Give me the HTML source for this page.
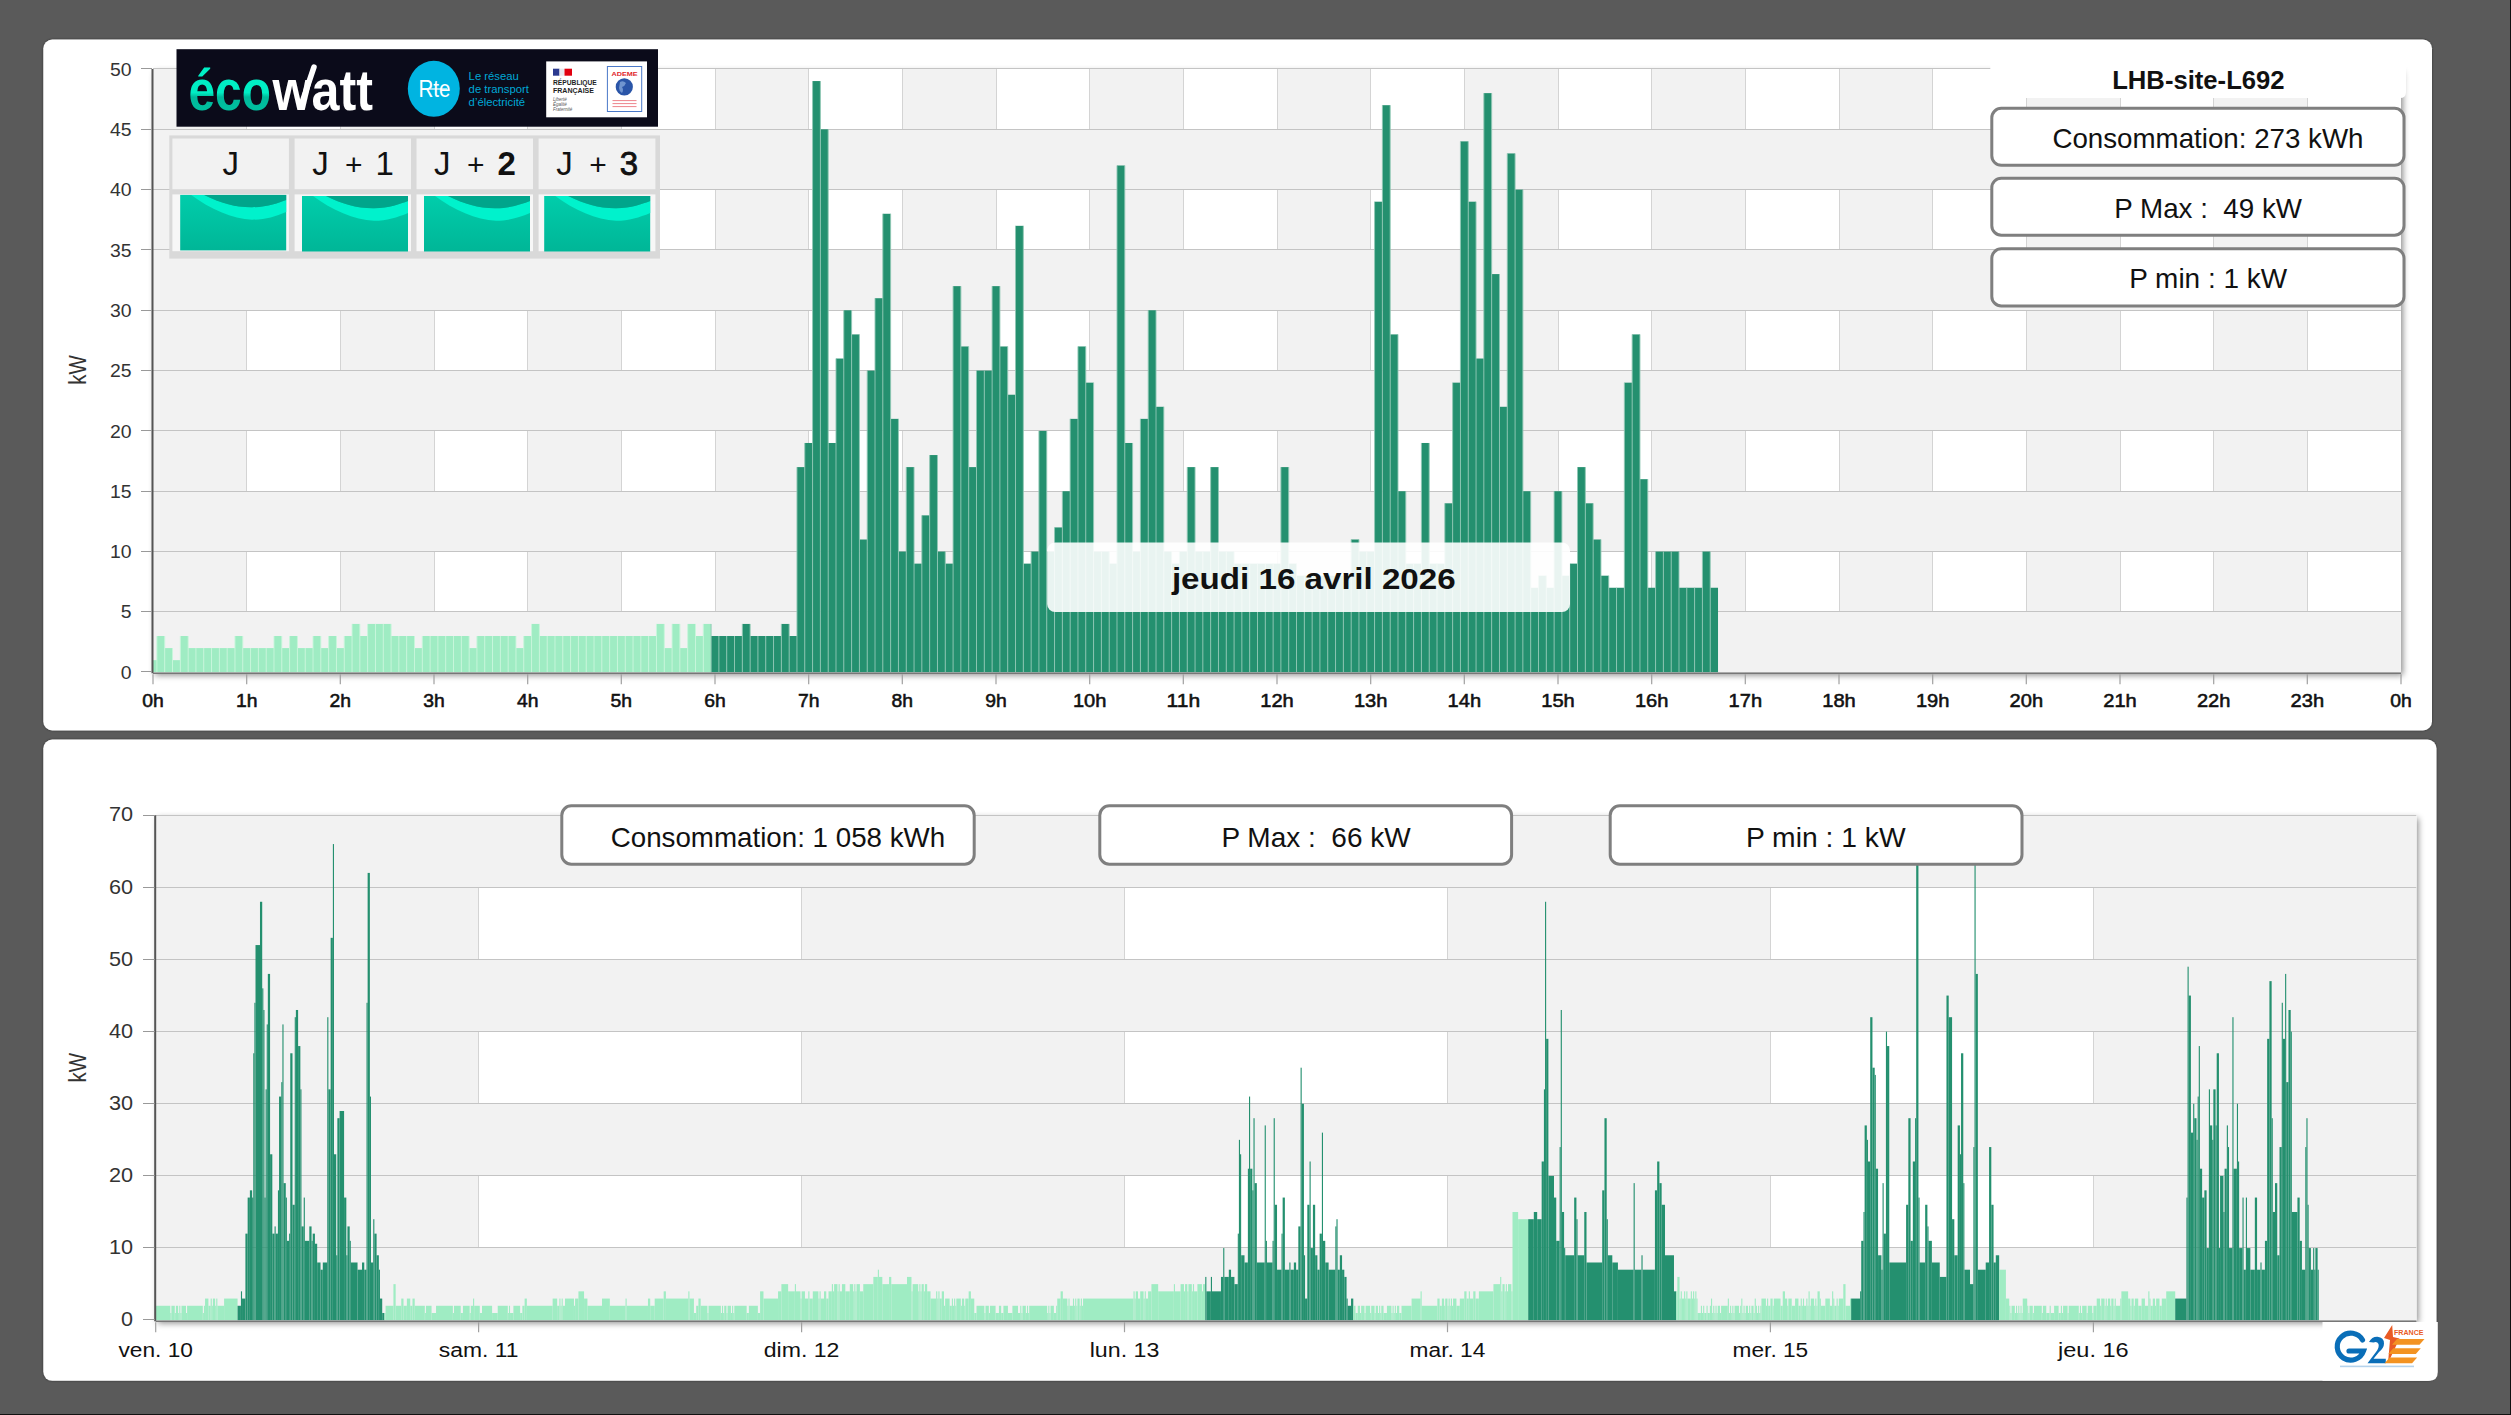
<!DOCTYPE html><html><head><meta charset="utf-8"><style>html,body{margin:0;padding:0;background:#5a5a5a;overflow:hidden} svg{display:block} text{font-family:'Liberation Sans', sans-serif}</style></head><body>
<svg width="2511" height="1415" viewBox="0 0 2511 1415">
<defs><filter id="psh" x="-5%" y="-5%" width="110%" height="115%"><feDropShadow dx="2" dy="3" stdDeviation="3" flood-color="#000" flood-opacity="0.45"/></filter><filter id="pan" x="-2%" y="-2%" width="104%" height="104%"><feDropShadow dx="0" dy="0" stdDeviation="0.8" flood-color="#000" flood-opacity="0.5"/></filter><linearGradient id="eco" x1="0" y1="0" x2="0" y2="1"><stop offset="0" stop-color="#00f0c6"/><stop offset="0.55" stop-color="#00eec4"/><stop offset="0.62" stop-color="#00b99b"/><stop offset="1" stop-color="#00c4a2"/></linearGradient><linearGradient id="wav" x1="0" y1="0" x2="0" y2="1"><stop offset="0" stop-color="#00cdab"/><stop offset="1" stop-color="#00b697"/></linearGradient><g id="wave"><rect x="0" y="0" width="106" height="55.5" fill="url(#wav)"/><path d="M11,0 L24,0 C40,8 55,12.5 72,12.3 C87,12 98,8 106,5 L106,17 C95,21.5 85,24.8 72,24.8 C52,24 30,14 11,0 Z" fill="#00f2cc"/><path d="M24,0 L106,0 L106,5 C98,8 87,12 72,12.3 C55,12.5 40,8 24,0 Z" fill="#00a58b"/></g></defs>
<rect x="0.00" y="0.00" width="2511.00" height="1415.00" fill="#5a5a5a" />
<rect x="2510.00" y="0.00" width="1.00" height="1415.00" fill="#111" />
<rect x="0.00" y="1414.00" width="2511.00" height="1.00" fill="#111" />
<rect x="43.3" y="39.6" width="2388.7" height="690.9" rx="9" fill="#fff" filter="url(#pan)"/>
<rect x="43.3" y="739.6" width="2393.2" height="641.2" rx="9" fill="#fff" filter="url(#pan)"/>
<rect x="153.0" y="69.0" width="2248.0" height="603.2" fill="#fff" filter="url(#psh)"/>
<rect x="153.00" y="69.00" width="93.67" height="603.20" fill="#f2f2f2" />
<rect x="340.33" y="69.00" width="93.67" height="603.20" fill="#f2f2f2" />
<rect x="527.67" y="69.00" width="93.67" height="603.20" fill="#f2f2f2" />
<rect x="715.00" y="69.00" width="93.67" height="603.20" fill="#f2f2f2" />
<rect x="902.33" y="69.00" width="93.67" height="603.20" fill="#f2f2f2" />
<rect x="1089.67" y="69.00" width="93.67" height="603.20" fill="#f2f2f2" />
<rect x="1277.00" y="69.00" width="93.67" height="603.20" fill="#f2f2f2" />
<rect x="1464.33" y="69.00" width="93.67" height="603.20" fill="#f2f2f2" />
<rect x="1651.67" y="69.00" width="93.67" height="603.20" fill="#f2f2f2" />
<rect x="1839.00" y="69.00" width="93.67" height="603.20" fill="#f2f2f2" />
<rect x="2026.33" y="69.00" width="93.67" height="603.20" fill="#f2f2f2" />
<rect x="2213.67" y="69.00" width="93.67" height="603.20" fill="#f2f2f2" />
<line x1="246.5" y1="69.0" x2="246.5" y2="672.2" stroke="#d4d4d4" stroke-width="1"/>
<line x1="340.5" y1="69.0" x2="340.5" y2="672.2" stroke="#d4d4d4" stroke-width="1"/>
<line x1="434.5" y1="69.0" x2="434.5" y2="672.2" stroke="#d4d4d4" stroke-width="1"/>
<line x1="527.5" y1="69.0" x2="527.5" y2="672.2" stroke="#d4d4d4" stroke-width="1"/>
<line x1="621.5" y1="69.0" x2="621.5" y2="672.2" stroke="#d4d4d4" stroke-width="1"/>
<line x1="715.5" y1="69.0" x2="715.5" y2="672.2" stroke="#d4d4d4" stroke-width="1"/>
<line x1="808.5" y1="69.0" x2="808.5" y2="672.2" stroke="#d4d4d4" stroke-width="1"/>
<line x1="902.5" y1="69.0" x2="902.5" y2="672.2" stroke="#d4d4d4" stroke-width="1"/>
<line x1="996.5" y1="69.0" x2="996.5" y2="672.2" stroke="#d4d4d4" stroke-width="1"/>
<line x1="1089.5" y1="69.0" x2="1089.5" y2="672.2" stroke="#d4d4d4" stroke-width="1"/>
<line x1="1183.5" y1="69.0" x2="1183.5" y2="672.2" stroke="#d4d4d4" stroke-width="1"/>
<line x1="1277.5" y1="69.0" x2="1277.5" y2="672.2" stroke="#d4d4d4" stroke-width="1"/>
<line x1="1370.5" y1="69.0" x2="1370.5" y2="672.2" stroke="#d4d4d4" stroke-width="1"/>
<line x1="1464.5" y1="69.0" x2="1464.5" y2="672.2" stroke="#d4d4d4" stroke-width="1"/>
<line x1="1558.5" y1="69.0" x2="1558.5" y2="672.2" stroke="#d4d4d4" stroke-width="1"/>
<line x1="1651.5" y1="69.0" x2="1651.5" y2="672.2" stroke="#d4d4d4" stroke-width="1"/>
<line x1="1745.5" y1="69.0" x2="1745.5" y2="672.2" stroke="#d4d4d4" stroke-width="1"/>
<line x1="1839.5" y1="69.0" x2="1839.5" y2="672.2" stroke="#d4d4d4" stroke-width="1"/>
<line x1="1932.5" y1="69.0" x2="1932.5" y2="672.2" stroke="#d4d4d4" stroke-width="1"/>
<line x1="2026.5" y1="69.0" x2="2026.5" y2="672.2" stroke="#d4d4d4" stroke-width="1"/>
<line x1="2120.5" y1="69.0" x2="2120.5" y2="672.2" stroke="#d4d4d4" stroke-width="1"/>
<line x1="2213.5" y1="69.0" x2="2213.5" y2="672.2" stroke="#d4d4d4" stroke-width="1"/>
<line x1="2307.5" y1="69.0" x2="2307.5" y2="672.2" stroke="#d4d4d4" stroke-width="1"/>
<rect x="153.00" y="611.88" width="2248.00" height="60.32" fill="#f2f2f2" />
<rect x="153.00" y="491.24" width="2248.00" height="60.32" fill="#f2f2f2" />
<rect x="153.00" y="370.60" width="2248.00" height="60.32" fill="#f2f2f2" />
<rect x="153.00" y="249.96" width="2248.00" height="60.32" fill="#f2f2f2" />
<rect x="153.00" y="129.32" width="2248.00" height="60.32" fill="#f2f2f2" />
<line x1="153.0" y1="611.5" x2="2401.0" y2="611.5" stroke="#c4c4c4" stroke-width="1"/>
<line x1="153.0" y1="551.5" x2="2401.0" y2="551.5" stroke="#c4c4c4" stroke-width="1"/>
<line x1="153.0" y1="491.5" x2="2401.0" y2="491.5" stroke="#c4c4c4" stroke-width="1"/>
<line x1="153.0" y1="430.5" x2="2401.0" y2="430.5" stroke="#c4c4c4" stroke-width="1"/>
<line x1="153.0" y1="370.5" x2="2401.0" y2="370.5" stroke="#c4c4c4" stroke-width="1"/>
<line x1="153.0" y1="310.5" x2="2401.0" y2="310.5" stroke="#c4c4c4" stroke-width="1"/>
<line x1="153.0" y1="249.5" x2="2401.0" y2="249.5" stroke="#c4c4c4" stroke-width="1"/>
<line x1="153.0" y1="189.5" x2="2401.0" y2="189.5" stroke="#c4c4c4" stroke-width="1"/>
<line x1="153.0" y1="129.5" x2="2401.0" y2="129.5" stroke="#c4c4c4" stroke-width="1"/>
<line x1="153.0" y1="68.5" x2="2401.0" y2="68.5" stroke="#c4c4c4" stroke-width="1"/>
<rect x="153.00" y="660.14" width="3.90" height="12.06" fill="#9fecc3" />
<rect x="156.90" y="636.01" width="7.81" height="36.19" fill="#9fecc3" />
<rect x="164.71" y="648.07" width="7.81" height="24.13" fill="#9fecc3" />
<rect x="172.51" y="660.14" width="7.81" height="12.06" fill="#9fecc3" />
<rect x="180.32" y="636.01" width="7.81" height="36.19" fill="#9fecc3" />
<rect x="188.12" y="648.07" width="7.81" height="24.13" fill="#9fecc3" />
<rect x="195.93" y="648.07" width="7.81" height="24.13" fill="#9fecc3" />
<rect x="203.74" y="648.07" width="7.81" height="24.13" fill="#9fecc3" />
<rect x="211.54" y="648.07" width="7.81" height="24.13" fill="#9fecc3" />
<rect x="219.35" y="648.07" width="7.81" height="24.13" fill="#9fecc3" />
<rect x="227.15" y="648.07" width="7.81" height="24.13" fill="#9fecc3" />
<rect x="234.96" y="636.01" width="7.81" height="36.19" fill="#9fecc3" />
<rect x="242.76" y="648.07" width="7.81" height="24.13" fill="#9fecc3" />
<rect x="250.57" y="648.07" width="7.81" height="24.13" fill="#9fecc3" />
<rect x="258.38" y="648.07" width="7.81" height="24.13" fill="#9fecc3" />
<rect x="266.18" y="648.07" width="7.81" height="24.13" fill="#9fecc3" />
<rect x="273.99" y="636.01" width="7.81" height="36.19" fill="#9fecc3" />
<rect x="281.79" y="648.07" width="7.81" height="24.13" fill="#9fecc3" />
<rect x="289.60" y="636.01" width="7.81" height="36.19" fill="#9fecc3" />
<rect x="297.40" y="648.07" width="7.81" height="24.13" fill="#9fecc3" />
<rect x="305.21" y="648.07" width="7.81" height="24.13" fill="#9fecc3" />
<rect x="313.01" y="636.01" width="7.81" height="36.19" fill="#9fecc3" />
<rect x="320.82" y="648.07" width="7.81" height="24.13" fill="#9fecc3" />
<rect x="328.63" y="636.01" width="7.81" height="36.19" fill="#9fecc3" />
<rect x="336.43" y="648.07" width="7.81" height="24.13" fill="#9fecc3" />
<rect x="344.24" y="636.01" width="7.81" height="36.19" fill="#9fecc3" />
<rect x="352.04" y="623.94" width="7.81" height="48.26" fill="#9fecc3" />
<rect x="359.85" y="636.01" width="7.81" height="36.19" fill="#9fecc3" />
<rect x="367.65" y="623.94" width="7.81" height="48.26" fill="#9fecc3" />
<rect x="375.46" y="623.94" width="7.81" height="48.26" fill="#9fecc3" />
<rect x="383.26" y="623.94" width="7.81" height="48.26" fill="#9fecc3" />
<rect x="391.07" y="636.01" width="7.81" height="36.19" fill="#9fecc3" />
<rect x="398.88" y="636.01" width="7.81" height="36.19" fill="#9fecc3" />
<rect x="406.68" y="636.01" width="7.81" height="36.19" fill="#9fecc3" />
<rect x="414.49" y="648.07" width="7.81" height="24.13" fill="#9fecc3" />
<rect x="422.29" y="636.01" width="7.81" height="36.19" fill="#9fecc3" />
<rect x="430.10" y="636.01" width="7.81" height="36.19" fill="#9fecc3" />
<rect x="437.90" y="636.01" width="7.81" height="36.19" fill="#9fecc3" />
<rect x="445.71" y="636.01" width="7.81" height="36.19" fill="#9fecc3" />
<rect x="453.51" y="636.01" width="7.81" height="36.19" fill="#9fecc3" />
<rect x="461.32" y="636.01" width="7.81" height="36.19" fill="#9fecc3" />
<rect x="469.13" y="648.07" width="7.81" height="24.13" fill="#9fecc3" />
<rect x="476.93" y="636.01" width="7.81" height="36.19" fill="#9fecc3" />
<rect x="484.74" y="636.01" width="7.81" height="36.19" fill="#9fecc3" />
<rect x="492.54" y="636.01" width="7.81" height="36.19" fill="#9fecc3" />
<rect x="500.35" y="636.01" width="7.81" height="36.19" fill="#9fecc3" />
<rect x="508.15" y="636.01" width="7.81" height="36.19" fill="#9fecc3" />
<rect x="515.96" y="648.07" width="7.81" height="24.13" fill="#9fecc3" />
<rect x="523.76" y="636.01" width="7.81" height="36.19" fill="#9fecc3" />
<rect x="531.57" y="623.94" width="7.81" height="48.26" fill="#9fecc3" />
<rect x="539.38" y="636.01" width="7.81" height="36.19" fill="#9fecc3" />
<rect x="547.18" y="636.01" width="7.81" height="36.19" fill="#9fecc3" />
<rect x="554.99" y="636.01" width="7.81" height="36.19" fill="#9fecc3" />
<rect x="562.79" y="636.01" width="7.81" height="36.19" fill="#9fecc3" />
<rect x="570.60" y="636.01" width="7.81" height="36.19" fill="#9fecc3" />
<rect x="578.40" y="636.01" width="7.81" height="36.19" fill="#9fecc3" />
<rect x="586.21" y="636.01" width="7.81" height="36.19" fill="#9fecc3" />
<rect x="594.01" y="636.01" width="7.81" height="36.19" fill="#9fecc3" />
<rect x="601.82" y="636.01" width="7.81" height="36.19" fill="#9fecc3" />
<rect x="609.62" y="636.01" width="7.81" height="36.19" fill="#9fecc3" />
<rect x="617.43" y="636.01" width="7.81" height="36.19" fill="#9fecc3" />
<rect x="625.24" y="636.01" width="7.81" height="36.19" fill="#9fecc3" />
<rect x="633.04" y="636.01" width="7.81" height="36.19" fill="#9fecc3" />
<rect x="640.85" y="636.01" width="7.81" height="36.19" fill="#9fecc3" />
<rect x="648.65" y="636.01" width="7.81" height="36.19" fill="#9fecc3" />
<rect x="656.46" y="623.94" width="7.81" height="48.26" fill="#9fecc3" />
<rect x="664.26" y="648.07" width="7.81" height="24.13" fill="#9fecc3" />
<rect x="672.07" y="623.94" width="7.81" height="48.26" fill="#9fecc3" />
<rect x="679.88" y="648.07" width="7.81" height="24.13" fill="#9fecc3" />
<rect x="687.68" y="623.94" width="7.81" height="48.26" fill="#9fecc3" />
<rect x="695.49" y="636.01" width="7.81" height="36.19" fill="#9fecc3" />
<rect x="703.29" y="623.94" width="7.81" height="48.26" fill="#9fecc3" />
<rect x="711.10" y="636.01" width="7.81" height="36.19" fill="#24906f" />
<rect x="718.90" y="636.01" width="7.81" height="36.19" fill="#24906f" />
<rect x="726.71" y="636.01" width="7.81" height="36.19" fill="#24906f" />
<rect x="734.51" y="636.01" width="7.81" height="36.19" fill="#24906f" />
<rect x="742.32" y="623.94" width="7.81" height="48.26" fill="#24906f" />
<rect x="750.12" y="636.01" width="7.81" height="36.19" fill="#24906f" />
<rect x="757.93" y="636.01" width="7.81" height="36.19" fill="#24906f" />
<rect x="765.74" y="636.01" width="7.81" height="36.19" fill="#24906f" />
<rect x="773.54" y="636.01" width="7.81" height="36.19" fill="#24906f" />
<rect x="781.35" y="623.94" width="7.81" height="48.26" fill="#24906f" />
<rect x="789.15" y="636.01" width="7.81" height="36.19" fill="#24906f" />
<rect x="796.96" y="467.11" width="7.81" height="205.09" fill="#24906f" />
<rect x="804.76" y="442.98" width="7.81" height="229.22" fill="#24906f" />
<rect x="812.57" y="81.06" width="7.81" height="591.14" fill="#24906f" />
<rect x="820.38" y="129.32" width="7.81" height="542.88" fill="#24906f" />
<rect x="828.18" y="442.98" width="7.81" height="229.22" fill="#24906f" />
<rect x="835.99" y="358.54" width="7.81" height="313.66" fill="#24906f" />
<rect x="843.79" y="310.28" width="7.81" height="361.92" fill="#24906f" />
<rect x="851.60" y="334.41" width="7.81" height="337.79" fill="#24906f" />
<rect x="859.40" y="539.50" width="7.81" height="132.70" fill="#24906f" />
<rect x="867.21" y="370.60" width="7.81" height="301.60" fill="#24906f" />
<rect x="875.01" y="298.22" width="7.81" height="373.98" fill="#24906f" />
<rect x="882.82" y="213.77" width="7.81" height="458.43" fill="#24906f" />
<rect x="890.62" y="418.86" width="7.81" height="253.34" fill="#24906f" />
<rect x="898.43" y="551.56" width="7.81" height="120.64" fill="#24906f" />
<rect x="906.24" y="467.11" width="7.81" height="205.09" fill="#24906f" />
<rect x="914.04" y="563.62" width="7.81" height="108.58" fill="#24906f" />
<rect x="921.85" y="515.37" width="7.81" height="156.83" fill="#24906f" />
<rect x="929.65" y="455.05" width="7.81" height="217.15" fill="#24906f" />
<rect x="937.46" y="551.56" width="7.81" height="120.64" fill="#24906f" />
<rect x="945.26" y="563.62" width="7.81" height="108.58" fill="#24906f" />
<rect x="953.07" y="286.15" width="7.81" height="386.05" fill="#24906f" />
<rect x="960.88" y="346.47" width="7.81" height="325.73" fill="#24906f" />
<rect x="968.68" y="467.11" width="7.81" height="205.09" fill="#24906f" />
<rect x="976.49" y="370.60" width="7.81" height="301.60" fill="#24906f" />
<rect x="984.29" y="370.60" width="7.81" height="301.60" fill="#24906f" />
<rect x="992.10" y="286.15" width="7.81" height="386.05" fill="#24906f" />
<rect x="999.90" y="346.47" width="7.81" height="325.73" fill="#24906f" />
<rect x="1007.71" y="394.73" width="7.81" height="277.47" fill="#24906f" />
<rect x="1015.51" y="225.83" width="7.81" height="446.37" fill="#24906f" />
<rect x="1023.32" y="563.62" width="7.81" height="108.58" fill="#24906f" />
<rect x="1031.12" y="551.56" width="7.81" height="120.64" fill="#24906f" />
<rect x="1038.93" y="430.92" width="7.81" height="241.28" fill="#24906f" />
<rect x="1046.74" y="551.56" width="7.81" height="120.64" fill="#24906f" />
<rect x="1054.54" y="527.43" width="7.81" height="144.77" fill="#24906f" />
<rect x="1062.35" y="491.24" width="7.81" height="180.96" fill="#24906f" />
<rect x="1070.15" y="418.86" width="7.81" height="253.34" fill="#24906f" />
<rect x="1077.96" y="346.47" width="7.81" height="325.73" fill="#24906f" />
<rect x="1085.76" y="382.66" width="7.81" height="289.54" fill="#24906f" />
<rect x="1093.57" y="551.56" width="7.81" height="120.64" fill="#24906f" />
<rect x="1101.38" y="551.56" width="7.81" height="120.64" fill="#24906f" />
<rect x="1109.18" y="563.62" width="7.81" height="108.58" fill="#24906f" />
<rect x="1116.99" y="165.51" width="7.81" height="506.69" fill="#24906f" />
<rect x="1124.79" y="442.98" width="7.81" height="229.22" fill="#24906f" />
<rect x="1132.60" y="551.56" width="7.81" height="120.64" fill="#24906f" />
<rect x="1140.40" y="418.86" width="7.81" height="253.34" fill="#24906f" />
<rect x="1148.21" y="310.28" width="7.81" height="361.92" fill="#24906f" />
<rect x="1156.01" y="406.79" width="7.81" height="265.41" fill="#24906f" />
<rect x="1163.82" y="551.56" width="7.81" height="120.64" fill="#24906f" />
<rect x="1171.62" y="563.62" width="7.81" height="108.58" fill="#24906f" />
<rect x="1179.43" y="551.56" width="7.81" height="120.64" fill="#24906f" />
<rect x="1187.24" y="467.11" width="7.81" height="205.09" fill="#24906f" />
<rect x="1195.04" y="551.56" width="7.81" height="120.64" fill="#24906f" />
<rect x="1202.85" y="551.56" width="7.81" height="120.64" fill="#24906f" />
<rect x="1210.65" y="467.11" width="7.81" height="205.09" fill="#24906f" />
<rect x="1218.46" y="551.56" width="7.81" height="120.64" fill="#24906f" />
<rect x="1226.26" y="551.56" width="7.81" height="120.64" fill="#24906f" />
<rect x="1234.07" y="563.62" width="7.81" height="108.58" fill="#24906f" />
<rect x="1241.88" y="563.62" width="7.81" height="108.58" fill="#24906f" />
<rect x="1249.68" y="563.62" width="7.81" height="108.58" fill="#24906f" />
<rect x="1257.49" y="563.62" width="7.81" height="108.58" fill="#24906f" />
<rect x="1265.29" y="563.62" width="7.81" height="108.58" fill="#24906f" />
<rect x="1273.10" y="563.62" width="7.81" height="108.58" fill="#24906f" />
<rect x="1280.90" y="467.11" width="7.81" height="205.09" fill="#24906f" />
<rect x="1288.71" y="563.62" width="7.81" height="108.58" fill="#24906f" />
<rect x="1296.51" y="575.69" width="7.81" height="96.51" fill="#24906f" />
<rect x="1304.32" y="575.69" width="7.81" height="96.51" fill="#24906f" />
<rect x="1312.12" y="575.69" width="7.81" height="96.51" fill="#24906f" />
<rect x="1319.93" y="575.69" width="7.81" height="96.51" fill="#24906f" />
<rect x="1327.74" y="575.69" width="7.81" height="96.51" fill="#24906f" />
<rect x="1335.54" y="575.69" width="7.81" height="96.51" fill="#24906f" />
<rect x="1343.35" y="575.69" width="7.81" height="96.51" fill="#24906f" />
<rect x="1351.15" y="539.50" width="7.81" height="132.70" fill="#24906f" />
<rect x="1358.96" y="551.56" width="7.81" height="120.64" fill="#24906f" />
<rect x="1366.76" y="551.56" width="7.81" height="120.64" fill="#24906f" />
<rect x="1374.57" y="201.70" width="7.81" height="470.50" fill="#24906f" />
<rect x="1382.38" y="105.19" width="7.81" height="567.01" fill="#24906f" />
<rect x="1390.18" y="334.41" width="7.81" height="337.79" fill="#24906f" />
<rect x="1397.99" y="491.24" width="7.81" height="180.96" fill="#24906f" />
<rect x="1405.79" y="563.62" width="7.81" height="108.58" fill="#24906f" />
<rect x="1413.60" y="563.62" width="7.81" height="108.58" fill="#24906f" />
<rect x="1421.40" y="442.98" width="7.81" height="229.22" fill="#24906f" />
<rect x="1429.21" y="563.62" width="7.81" height="108.58" fill="#24906f" />
<rect x="1437.01" y="563.62" width="7.81" height="108.58" fill="#24906f" />
<rect x="1444.82" y="503.30" width="7.81" height="168.90" fill="#24906f" />
<rect x="1452.62" y="382.66" width="7.81" height="289.54" fill="#24906f" />
<rect x="1460.43" y="141.38" width="7.81" height="530.82" fill="#24906f" />
<rect x="1468.24" y="201.70" width="7.81" height="470.50" fill="#24906f" />
<rect x="1476.04" y="358.54" width="7.81" height="313.66" fill="#24906f" />
<rect x="1483.85" y="93.13" width="7.81" height="579.07" fill="#24906f" />
<rect x="1491.65" y="274.09" width="7.81" height="398.11" fill="#24906f" />
<rect x="1499.46" y="406.79" width="7.81" height="265.41" fill="#24906f" />
<rect x="1507.26" y="153.45" width="7.81" height="518.75" fill="#24906f" />
<rect x="1515.07" y="189.64" width="7.81" height="482.56" fill="#24906f" />
<rect x="1522.88" y="491.24" width="7.81" height="180.96" fill="#24906f" />
<rect x="1530.68" y="587.75" width="7.81" height="84.45" fill="#24906f" />
<rect x="1538.49" y="575.69" width="7.81" height="96.51" fill="#24906f" />
<rect x="1546.29" y="587.75" width="7.81" height="84.45" fill="#24906f" />
<rect x="1554.10" y="491.24" width="7.81" height="180.96" fill="#24906f" />
<rect x="1561.90" y="575.69" width="7.81" height="96.51" fill="#24906f" />
<rect x="1569.71" y="563.62" width="7.81" height="108.58" fill="#24906f" />
<rect x="1577.51" y="467.11" width="7.81" height="205.09" fill="#24906f" />
<rect x="1585.32" y="503.30" width="7.81" height="168.90" fill="#24906f" />
<rect x="1593.12" y="539.50" width="7.81" height="132.70" fill="#24906f" />
<rect x="1600.93" y="575.69" width="7.81" height="96.51" fill="#24906f" />
<rect x="1608.74" y="587.75" width="7.81" height="84.45" fill="#24906f" />
<rect x="1616.54" y="587.75" width="7.81" height="84.45" fill="#24906f" />
<rect x="1624.35" y="382.66" width="7.81" height="289.54" fill="#24906f" />
<rect x="1632.15" y="334.41" width="7.81" height="337.79" fill="#24906f" />
<rect x="1639.96" y="479.18" width="7.81" height="193.02" fill="#24906f" />
<rect x="1647.76" y="587.75" width="7.81" height="84.45" fill="#24906f" />
<rect x="1655.57" y="551.56" width="7.81" height="120.64" fill="#24906f" />
<rect x="1663.38" y="551.56" width="7.81" height="120.64" fill="#24906f" />
<rect x="1671.18" y="551.56" width="7.81" height="120.64" fill="#24906f" />
<rect x="1678.99" y="587.75" width="7.81" height="84.45" fill="#24906f" />
<rect x="1686.79" y="587.75" width="7.81" height="84.45" fill="#24906f" />
<rect x="1694.60" y="587.75" width="7.81" height="84.45" fill="#24906f" />
<rect x="1702.40" y="551.56" width="7.81" height="120.64" fill="#24906f" />
<rect x="1710.21" y="587.75" width="7.81" height="84.45" fill="#24906f" />
<rect x="156.40" y="636.01" width="1" height="36.19" fill="#c9f6dc" opacity="0.9"/><rect x="164.21" y="636.01" width="1" height="36.19" fill="#c9f6dc" opacity="0.9"/><rect x="172.01" y="648.07" width="1" height="24.13" fill="#c9f6dc" opacity="0.9"/><rect x="179.82" y="636.01" width="1" height="36.19" fill="#c9f6dc" opacity="0.9"/><rect x="187.62" y="636.01" width="1" height="36.19" fill="#c9f6dc" opacity="0.9"/><rect x="195.43" y="648.07" width="1" height="24.13" fill="#c9f6dc" opacity="0.9"/><rect x="203.24" y="648.07" width="1" height="24.13" fill="#c9f6dc" opacity="0.9"/><rect x="211.04" y="648.07" width="1" height="24.13" fill="#c9f6dc" opacity="0.9"/><rect x="218.85" y="648.07" width="1" height="24.13" fill="#c9f6dc" opacity="0.9"/><rect x="226.65" y="648.07" width="1" height="24.13" fill="#c9f6dc" opacity="0.9"/><rect x="234.46" y="636.01" width="1" height="36.19" fill="#c9f6dc" opacity="0.9"/><rect x="242.26" y="636.01" width="1" height="36.19" fill="#c9f6dc" opacity="0.9"/><rect x="250.07" y="648.07" width="1" height="24.13" fill="#c9f6dc" opacity="0.9"/><rect x="257.88" y="648.07" width="1" height="24.13" fill="#c9f6dc" opacity="0.9"/><rect x="265.68" y="648.07" width="1" height="24.13" fill="#c9f6dc" opacity="0.9"/><rect x="273.49" y="636.01" width="1" height="36.19" fill="#c9f6dc" opacity="0.9"/><rect x="281.29" y="636.01" width="1" height="36.19" fill="#c9f6dc" opacity="0.9"/><rect x="289.10" y="636.01" width="1" height="36.19" fill="#c9f6dc" opacity="0.9"/><rect x="296.90" y="636.01" width="1" height="36.19" fill="#c9f6dc" opacity="0.9"/><rect x="304.71" y="648.07" width="1" height="24.13" fill="#c9f6dc" opacity="0.9"/><rect x="312.51" y="636.01" width="1" height="36.19" fill="#c9f6dc" opacity="0.9"/><rect x="320.32" y="636.01" width="1" height="36.19" fill="#c9f6dc" opacity="0.9"/><rect x="328.13" y="636.01" width="1" height="36.19" fill="#c9f6dc" opacity="0.9"/><rect x="335.93" y="636.01" width="1" height="36.19" fill="#c9f6dc" opacity="0.9"/><rect x="343.74" y="636.01" width="1" height="36.19" fill="#c9f6dc" opacity="0.9"/><rect x="351.54" y="623.94" width="1" height="48.26" fill="#c9f6dc" opacity="0.9"/><rect x="359.35" y="623.94" width="1" height="48.26" fill="#c9f6dc" opacity="0.9"/><rect x="367.15" y="623.94" width="1" height="48.26" fill="#c9f6dc" opacity="0.9"/><rect x="374.96" y="623.94" width="1" height="48.26" fill="#c9f6dc" opacity="0.9"/><rect x="382.76" y="623.94" width="1" height="48.26" fill="#c9f6dc" opacity="0.9"/><rect x="390.57" y="623.94" width="1" height="48.26" fill="#c9f6dc" opacity="0.9"/><rect x="398.38" y="636.01" width="1" height="36.19" fill="#c9f6dc" opacity="0.9"/><rect x="406.18" y="636.01" width="1" height="36.19" fill="#c9f6dc" opacity="0.9"/><rect x="413.99" y="636.01" width="1" height="36.19" fill="#c9f6dc" opacity="0.9"/><rect x="421.79" y="636.01" width="1" height="36.19" fill="#c9f6dc" opacity="0.9"/><rect x="429.60" y="636.01" width="1" height="36.19" fill="#c9f6dc" opacity="0.9"/><rect x="437.40" y="636.01" width="1" height="36.19" fill="#c9f6dc" opacity="0.9"/><rect x="445.21" y="636.01" width="1" height="36.19" fill="#c9f6dc" opacity="0.9"/><rect x="453.01" y="636.01" width="1" height="36.19" fill="#c9f6dc" opacity="0.9"/><rect x="460.82" y="636.01" width="1" height="36.19" fill="#c9f6dc" opacity="0.9"/><rect x="468.63" y="636.01" width="1" height="36.19" fill="#c9f6dc" opacity="0.9"/><rect x="476.43" y="636.01" width="1" height="36.19" fill="#c9f6dc" opacity="0.9"/><rect x="484.24" y="636.01" width="1" height="36.19" fill="#c9f6dc" opacity="0.9"/><rect x="492.04" y="636.01" width="1" height="36.19" fill="#c9f6dc" opacity="0.9"/><rect x="499.85" y="636.01" width="1" height="36.19" fill="#c9f6dc" opacity="0.9"/><rect x="507.65" y="636.01" width="1" height="36.19" fill="#c9f6dc" opacity="0.9"/><rect x="515.46" y="636.01" width="1" height="36.19" fill="#c9f6dc" opacity="0.9"/><rect x="523.26" y="636.01" width="1" height="36.19" fill="#c9f6dc" opacity="0.9"/><rect x="531.07" y="623.94" width="1" height="48.26" fill="#c9f6dc" opacity="0.9"/><rect x="538.88" y="623.94" width="1" height="48.26" fill="#c9f6dc" opacity="0.9"/><rect x="546.68" y="636.01" width="1" height="36.19" fill="#c9f6dc" opacity="0.9"/><rect x="554.49" y="636.01" width="1" height="36.19" fill="#c9f6dc" opacity="0.9"/><rect x="562.29" y="636.01" width="1" height="36.19" fill="#c9f6dc" opacity="0.9"/><rect x="570.10" y="636.01" width="1" height="36.19" fill="#c9f6dc" opacity="0.9"/><rect x="577.90" y="636.01" width="1" height="36.19" fill="#c9f6dc" opacity="0.9"/><rect x="585.71" y="636.01" width="1" height="36.19" fill="#c9f6dc" opacity="0.9"/><rect x="593.51" y="636.01" width="1" height="36.19" fill="#c9f6dc" opacity="0.9"/><rect x="601.32" y="636.01" width="1" height="36.19" fill="#c9f6dc" opacity="0.9"/><rect x="609.12" y="636.01" width="1" height="36.19" fill="#c9f6dc" opacity="0.9"/><rect x="616.93" y="636.01" width="1" height="36.19" fill="#c9f6dc" opacity="0.9"/><rect x="624.74" y="636.01" width="1" height="36.19" fill="#c9f6dc" opacity="0.9"/><rect x="632.54" y="636.01" width="1" height="36.19" fill="#c9f6dc" opacity="0.9"/><rect x="640.35" y="636.01" width="1" height="36.19" fill="#c9f6dc" opacity="0.9"/><rect x="648.15" y="636.01" width="1" height="36.19" fill="#c9f6dc" opacity="0.9"/><rect x="655.96" y="623.94" width="1" height="48.26" fill="#c9f6dc" opacity="0.9"/><rect x="663.76" y="623.94" width="1" height="48.26" fill="#c9f6dc" opacity="0.9"/><rect x="671.57" y="623.94" width="1" height="48.26" fill="#c9f6dc" opacity="0.9"/><rect x="679.38" y="623.94" width="1" height="48.26" fill="#c9f6dc" opacity="0.9"/><rect x="687.18" y="623.94" width="1" height="48.26" fill="#c9f6dc" opacity="0.9"/><rect x="694.99" y="623.94" width="1" height="48.26" fill="#c9f6dc" opacity="0.9"/><rect x="702.79" y="623.94" width="1" height="48.26" fill="#c9f6dc" opacity="0.9"/><rect x="710.60" y="623.94" width="1" height="48.26" fill="#90c8b5" opacity="0.9"/><rect x="718.40" y="636.01" width="1" height="36.19" fill="#90c8b5" opacity="0.9"/><rect x="726.21" y="636.01" width="1" height="36.19" fill="#90c8b5" opacity="0.9"/><rect x="734.01" y="636.01" width="1" height="36.19" fill="#90c8b5" opacity="0.9"/><rect x="741.82" y="623.94" width="1" height="48.26" fill="#90c8b5" opacity="0.9"/><rect x="749.62" y="623.94" width="1" height="48.26" fill="#90c8b5" opacity="0.9"/><rect x="757.43" y="636.01" width="1" height="36.19" fill="#90c8b5" opacity="0.9"/><rect x="765.24" y="636.01" width="1" height="36.19" fill="#90c8b5" opacity="0.9"/><rect x="773.04" y="636.01" width="1" height="36.19" fill="#90c8b5" opacity="0.9"/><rect x="780.85" y="623.94" width="1" height="48.26" fill="#90c8b5" opacity="0.9"/><rect x="788.65" y="623.94" width="1" height="48.26" fill="#90c8b5" opacity="0.9"/><rect x="796.46" y="467.11" width="1" height="205.09" fill="#90c8b5" opacity="0.9"/><rect x="804.26" y="442.98" width="1" height="229.22" fill="#90c8b5" opacity="0.9"/><rect x="812.07" y="81.06" width="1" height="591.14" fill="#90c8b5" opacity="0.9"/><rect x="819.88" y="81.06" width="1" height="591.14" fill="#90c8b5" opacity="0.9"/><rect x="827.68" y="129.32" width="1" height="542.88" fill="#90c8b5" opacity="0.9"/><rect x="835.49" y="358.54" width="1" height="313.66" fill="#90c8b5" opacity="0.9"/><rect x="843.29" y="310.28" width="1" height="361.92" fill="#90c8b5" opacity="0.9"/><rect x="851.10" y="310.28" width="1" height="361.92" fill="#90c8b5" opacity="0.9"/><rect x="858.90" y="334.41" width="1" height="337.79" fill="#90c8b5" opacity="0.9"/><rect x="866.71" y="370.60" width="1" height="301.60" fill="#90c8b5" opacity="0.9"/><rect x="874.51" y="298.22" width="1" height="373.98" fill="#90c8b5" opacity="0.9"/><rect x="882.32" y="213.77" width="1" height="458.43" fill="#90c8b5" opacity="0.9"/><rect x="890.12" y="213.77" width="1" height="458.43" fill="#90c8b5" opacity="0.9"/><rect x="897.93" y="418.86" width="1" height="253.34" fill="#90c8b5" opacity="0.9"/><rect x="905.74" y="467.11" width="1" height="205.09" fill="#90c8b5" opacity="0.9"/><rect x="913.54" y="467.11" width="1" height="205.09" fill="#90c8b5" opacity="0.9"/><rect x="921.35" y="515.37" width="1" height="156.83" fill="#90c8b5" opacity="0.9"/><rect x="929.15" y="455.05" width="1" height="217.15" fill="#90c8b5" opacity="0.9"/><rect x="936.96" y="455.05" width="1" height="217.15" fill="#90c8b5" opacity="0.9"/><rect x="944.76" y="551.56" width="1" height="120.64" fill="#90c8b5" opacity="0.9"/><rect x="952.57" y="286.15" width="1" height="386.05" fill="#90c8b5" opacity="0.9"/><rect x="960.38" y="286.15" width="1" height="386.05" fill="#90c8b5" opacity="0.9"/><rect x="968.18" y="346.47" width="1" height="325.73" fill="#90c8b5" opacity="0.9"/><rect x="975.99" y="370.60" width="1" height="301.60" fill="#90c8b5" opacity="0.9"/><rect x="983.79" y="370.60" width="1" height="301.60" fill="#90c8b5" opacity="0.9"/><rect x="991.60" y="286.15" width="1" height="386.05" fill="#90c8b5" opacity="0.9"/><rect x="999.40" y="286.15" width="1" height="386.05" fill="#90c8b5" opacity="0.9"/><rect x="1007.21" y="346.47" width="1" height="325.73" fill="#90c8b5" opacity="0.9"/><rect x="1015.01" y="225.83" width="1" height="446.37" fill="#90c8b5" opacity="0.9"/><rect x="1022.82" y="225.83" width="1" height="446.37" fill="#90c8b5" opacity="0.9"/><rect x="1030.62" y="551.56" width="1" height="120.64" fill="#90c8b5" opacity="0.9"/><rect x="1038.43" y="430.92" width="1" height="241.28" fill="#90c8b5" opacity="0.9"/><rect x="1046.24" y="430.92" width="1" height="241.28" fill="#90c8b5" opacity="0.9"/><rect x="1054.04" y="527.43" width="1" height="144.77" fill="#90c8b5" opacity="0.9"/><rect x="1061.85" y="491.24" width="1" height="180.96" fill="#90c8b5" opacity="0.9"/><rect x="1069.65" y="418.86" width="1" height="253.34" fill="#90c8b5" opacity="0.9"/><rect x="1077.46" y="346.47" width="1" height="325.73" fill="#90c8b5" opacity="0.9"/><rect x="1085.26" y="346.47" width="1" height="325.73" fill="#90c8b5" opacity="0.9"/><rect x="1093.07" y="382.66" width="1" height="289.54" fill="#90c8b5" opacity="0.9"/><rect x="1100.88" y="551.56" width="1" height="120.64" fill="#90c8b5" opacity="0.9"/><rect x="1108.68" y="551.56" width="1" height="120.64" fill="#90c8b5" opacity="0.9"/><rect x="1116.49" y="165.51" width="1" height="506.69" fill="#90c8b5" opacity="0.9"/><rect x="1124.29" y="165.51" width="1" height="506.69" fill="#90c8b5" opacity="0.9"/><rect x="1132.10" y="442.98" width="1" height="229.22" fill="#90c8b5" opacity="0.9"/><rect x="1139.90" y="418.86" width="1" height="253.34" fill="#90c8b5" opacity="0.9"/><rect x="1147.71" y="310.28" width="1" height="361.92" fill="#90c8b5" opacity="0.9"/><rect x="1155.51" y="310.28" width="1" height="361.92" fill="#90c8b5" opacity="0.9"/><rect x="1163.32" y="406.79" width="1" height="265.41" fill="#90c8b5" opacity="0.9"/><rect x="1171.12" y="551.56" width="1" height="120.64" fill="#90c8b5" opacity="0.9"/><rect x="1178.93" y="551.56" width="1" height="120.64" fill="#90c8b5" opacity="0.9"/><rect x="1186.74" y="467.11" width="1" height="205.09" fill="#90c8b5" opacity="0.9"/><rect x="1194.54" y="467.11" width="1" height="205.09" fill="#90c8b5" opacity="0.9"/><rect x="1202.35" y="551.56" width="1" height="120.64" fill="#90c8b5" opacity="0.9"/><rect x="1210.15" y="467.11" width="1" height="205.09" fill="#90c8b5" opacity="0.9"/><rect x="1217.96" y="467.11" width="1" height="205.09" fill="#90c8b5" opacity="0.9"/><rect x="1225.76" y="551.56" width="1" height="120.64" fill="#90c8b5" opacity="0.9"/><rect x="1233.57" y="551.56" width="1" height="120.64" fill="#90c8b5" opacity="0.9"/><rect x="1241.38" y="563.62" width="1" height="108.58" fill="#90c8b5" opacity="0.9"/><rect x="1249.18" y="563.62" width="1" height="108.58" fill="#90c8b5" opacity="0.9"/><rect x="1256.99" y="563.62" width="1" height="108.58" fill="#90c8b5" opacity="0.9"/><rect x="1264.79" y="563.62" width="1" height="108.58" fill="#90c8b5" opacity="0.9"/><rect x="1272.60" y="563.62" width="1" height="108.58" fill="#90c8b5" opacity="0.9"/><rect x="1280.40" y="467.11" width="1" height="205.09" fill="#90c8b5" opacity="0.9"/><rect x="1288.21" y="467.11" width="1" height="205.09" fill="#90c8b5" opacity="0.9"/><rect x="1296.01" y="563.62" width="1" height="108.58" fill="#90c8b5" opacity="0.9"/><rect x="1303.82" y="575.69" width="1" height="96.51" fill="#90c8b5" opacity="0.9"/><rect x="1311.62" y="575.69" width="1" height="96.51" fill="#90c8b5" opacity="0.9"/><rect x="1319.43" y="575.69" width="1" height="96.51" fill="#90c8b5" opacity="0.9"/><rect x="1327.24" y="575.69" width="1" height="96.51" fill="#90c8b5" opacity="0.9"/><rect x="1335.04" y="575.69" width="1" height="96.51" fill="#90c8b5" opacity="0.9"/><rect x="1342.85" y="575.69" width="1" height="96.51" fill="#90c8b5" opacity="0.9"/><rect x="1350.65" y="539.50" width="1" height="132.70" fill="#90c8b5" opacity="0.9"/><rect x="1358.46" y="539.50" width="1" height="132.70" fill="#90c8b5" opacity="0.9"/><rect x="1366.26" y="551.56" width="1" height="120.64" fill="#90c8b5" opacity="0.9"/><rect x="1374.07" y="201.70" width="1" height="470.50" fill="#90c8b5" opacity="0.9"/><rect x="1381.88" y="105.19" width="1" height="567.01" fill="#90c8b5" opacity="0.9"/><rect x="1389.68" y="105.19" width="1" height="567.01" fill="#90c8b5" opacity="0.9"/><rect x="1397.49" y="334.41" width="1" height="337.79" fill="#90c8b5" opacity="0.9"/><rect x="1405.29" y="491.24" width="1" height="180.96" fill="#90c8b5" opacity="0.9"/><rect x="1413.10" y="563.62" width="1" height="108.58" fill="#90c8b5" opacity="0.9"/><rect x="1420.90" y="442.98" width="1" height="229.22" fill="#90c8b5" opacity="0.9"/><rect x="1428.71" y="442.98" width="1" height="229.22" fill="#90c8b5" opacity="0.9"/><rect x="1436.51" y="563.62" width="1" height="108.58" fill="#90c8b5" opacity="0.9"/><rect x="1444.32" y="503.30" width="1" height="168.90" fill="#90c8b5" opacity="0.9"/><rect x="1452.12" y="382.66" width="1" height="289.54" fill="#90c8b5" opacity="0.9"/><rect x="1459.93" y="141.38" width="1" height="530.82" fill="#90c8b5" opacity="0.9"/><rect x="1467.74" y="141.38" width="1" height="530.82" fill="#90c8b5" opacity="0.9"/><rect x="1475.54" y="201.70" width="1" height="470.50" fill="#90c8b5" opacity="0.9"/><rect x="1483.35" y="93.13" width="1" height="579.07" fill="#90c8b5" opacity="0.9"/><rect x="1491.15" y="93.13" width="1" height="579.07" fill="#90c8b5" opacity="0.9"/><rect x="1498.96" y="274.09" width="1" height="398.11" fill="#90c8b5" opacity="0.9"/><rect x="1506.76" y="153.45" width="1" height="518.75" fill="#90c8b5" opacity="0.9"/><rect x="1514.57" y="153.45" width="1" height="518.75" fill="#90c8b5" opacity="0.9"/><rect x="1522.38" y="189.64" width="1" height="482.56" fill="#90c8b5" opacity="0.9"/><rect x="1530.18" y="491.24" width="1" height="180.96" fill="#90c8b5" opacity="0.9"/><rect x="1537.99" y="575.69" width="1" height="96.51" fill="#90c8b5" opacity="0.9"/><rect x="1545.79" y="575.69" width="1" height="96.51" fill="#90c8b5" opacity="0.9"/><rect x="1553.60" y="491.24" width="1" height="180.96" fill="#90c8b5" opacity="0.9"/><rect x="1561.40" y="491.24" width="1" height="180.96" fill="#90c8b5" opacity="0.9"/><rect x="1569.21" y="563.62" width="1" height="108.58" fill="#90c8b5" opacity="0.9"/><rect x="1577.01" y="467.11" width="1" height="205.09" fill="#90c8b5" opacity="0.9"/><rect x="1584.82" y="467.11" width="1" height="205.09" fill="#90c8b5" opacity="0.9"/><rect x="1592.62" y="503.30" width="1" height="168.90" fill="#90c8b5" opacity="0.9"/><rect x="1600.43" y="539.50" width="1" height="132.70" fill="#90c8b5" opacity="0.9"/><rect x="1608.24" y="575.69" width="1" height="96.51" fill="#90c8b5" opacity="0.9"/><rect x="1616.04" y="587.75" width="1" height="84.45" fill="#90c8b5" opacity="0.9"/><rect x="1623.85" y="382.66" width="1" height="289.54" fill="#90c8b5" opacity="0.9"/><rect x="1631.65" y="334.41" width="1" height="337.79" fill="#90c8b5" opacity="0.9"/><rect x="1639.46" y="334.41" width="1" height="337.79" fill="#90c8b5" opacity="0.9"/><rect x="1647.26" y="479.18" width="1" height="193.02" fill="#90c8b5" opacity="0.9"/><rect x="1655.07" y="551.56" width="1" height="120.64" fill="#90c8b5" opacity="0.9"/><rect x="1662.88" y="551.56" width="1" height="120.64" fill="#90c8b5" opacity="0.9"/><rect x="1670.68" y="551.56" width="1" height="120.64" fill="#90c8b5" opacity="0.9"/><rect x="1678.49" y="551.56" width="1" height="120.64" fill="#90c8b5" opacity="0.9"/><rect x="1686.29" y="587.75" width="1" height="84.45" fill="#90c8b5" opacity="0.9"/><rect x="1694.10" y="587.75" width="1" height="84.45" fill="#90c8b5" opacity="0.9"/><rect x="1701.90" y="551.56" width="1" height="120.64" fill="#90c8b5" opacity="0.9"/><rect x="1709.71" y="551.56" width="1" height="120.64" fill="#90c8b5" opacity="0.9"/>
<line x1="152.5" y1="69.0" x2="152.5" y2="673.2" stroke="#555" stroke-width="2"/>
<line x1="153.0" y1="673.2" x2="2401.0" y2="673.2" stroke="#777" stroke-width="1.6"/>
<line x1="141" y1="671.5" x2="152.0" y2="671.5" stroke="#999" stroke-width="1"/>
<text x="131.50" y="678.80" font-size="18" fill="#333" text-anchor="end" font-weight="normal" textLength="10.8" lengthAdjust="spacingAndGlyphs" >0</text>
<line x1="141" y1="611.5" x2="152.0" y2="611.5" stroke="#999" stroke-width="1"/>
<text x="131.50" y="618.48" font-size="18" fill="#333" text-anchor="end" font-weight="normal" textLength="10.8" lengthAdjust="spacingAndGlyphs" >5</text>
<line x1="141" y1="551.5" x2="152.0" y2="551.5" stroke="#999" stroke-width="1"/>
<text x="131.50" y="558.16" font-size="18" fill="#333" text-anchor="end" font-weight="normal" textLength="21.6" lengthAdjust="spacingAndGlyphs" >10</text>
<line x1="141" y1="491.5" x2="152.0" y2="491.5" stroke="#999" stroke-width="1"/>
<text x="131.50" y="497.84" font-size="18" fill="#333" text-anchor="end" font-weight="normal" textLength="21.6" lengthAdjust="spacingAndGlyphs" >15</text>
<line x1="141" y1="430.5" x2="152.0" y2="430.5" stroke="#999" stroke-width="1"/>
<text x="131.50" y="437.52" font-size="18" fill="#333" text-anchor="end" font-weight="normal" textLength="21.6" lengthAdjust="spacingAndGlyphs" >20</text>
<line x1="141" y1="370.5" x2="152.0" y2="370.5" stroke="#999" stroke-width="1"/>
<text x="131.50" y="377.20" font-size="18" fill="#333" text-anchor="end" font-weight="normal" textLength="21.6" lengthAdjust="spacingAndGlyphs" >25</text>
<line x1="141" y1="310.5" x2="152.0" y2="310.5" stroke="#999" stroke-width="1"/>
<text x="131.50" y="316.88" font-size="18" fill="#333" text-anchor="end" font-weight="normal" textLength="21.6" lengthAdjust="spacingAndGlyphs" >30</text>
<line x1="141" y1="249.5" x2="152.0" y2="249.5" stroke="#999" stroke-width="1"/>
<text x="131.50" y="256.56" font-size="18" fill="#333" text-anchor="end" font-weight="normal" textLength="21.6" lengthAdjust="spacingAndGlyphs" >35</text>
<line x1="141" y1="189.5" x2="152.0" y2="189.5" stroke="#999" stroke-width="1"/>
<text x="131.50" y="196.24" font-size="18" fill="#333" text-anchor="end" font-weight="normal" textLength="21.6" lengthAdjust="spacingAndGlyphs" >40</text>
<line x1="141" y1="129.5" x2="152.0" y2="129.5" stroke="#999" stroke-width="1"/>
<text x="131.50" y="135.92" font-size="18" fill="#333" text-anchor="end" font-weight="normal" textLength="21.6" lengthAdjust="spacingAndGlyphs" >45</text>
<line x1="141" y1="68.5" x2="152.0" y2="68.5" stroke="#999" stroke-width="1"/>
<text x="131.50" y="75.60" font-size="18" fill="#333" text-anchor="end" font-weight="normal" textLength="21.6" lengthAdjust="spacingAndGlyphs" >50</text>
<line x1="153.0" y1="674.2" x2="153.0" y2="684.2" stroke="#a0a0a0" stroke-width="1.2"/>
<text x="153.00" y="706.80" font-size="18.5" fill="#111" text-anchor="middle" font-weight="normal" textLength="21.5" lengthAdjust="spacingAndGlyphs" stroke="#111" stroke-width="0.55">0h</text>
<line x1="246.7" y1="674.2" x2="246.7" y2="684.2" stroke="#a0a0a0" stroke-width="1.2"/>
<text x="246.67" y="706.80" font-size="18.5" fill="#111" text-anchor="middle" font-weight="normal" textLength="21.5" lengthAdjust="spacingAndGlyphs" stroke="#111" stroke-width="0.55">1h</text>
<line x1="340.3" y1="674.2" x2="340.3" y2="684.2" stroke="#a0a0a0" stroke-width="1.2"/>
<text x="340.33" y="706.80" font-size="18.5" fill="#111" text-anchor="middle" font-weight="normal" textLength="21.5" lengthAdjust="spacingAndGlyphs" stroke="#111" stroke-width="0.55">2h</text>
<line x1="434.0" y1="674.2" x2="434.0" y2="684.2" stroke="#a0a0a0" stroke-width="1.2"/>
<text x="434.00" y="706.80" font-size="18.5" fill="#111" text-anchor="middle" font-weight="normal" textLength="21.5" lengthAdjust="spacingAndGlyphs" stroke="#111" stroke-width="0.55">3h</text>
<line x1="527.7" y1="674.2" x2="527.7" y2="684.2" stroke="#a0a0a0" stroke-width="1.2"/>
<text x="527.67" y="706.80" font-size="18.5" fill="#111" text-anchor="middle" font-weight="normal" textLength="21.5" lengthAdjust="spacingAndGlyphs" stroke="#111" stroke-width="0.55">4h</text>
<line x1="621.3" y1="674.2" x2="621.3" y2="684.2" stroke="#a0a0a0" stroke-width="1.2"/>
<text x="621.33" y="706.80" font-size="18.5" fill="#111" text-anchor="middle" font-weight="normal" textLength="21.5" lengthAdjust="spacingAndGlyphs" stroke="#111" stroke-width="0.55">5h</text>
<line x1="715.0" y1="674.2" x2="715.0" y2="684.2" stroke="#a0a0a0" stroke-width="1.2"/>
<text x="715.00" y="706.80" font-size="18.5" fill="#111" text-anchor="middle" font-weight="normal" textLength="21.5" lengthAdjust="spacingAndGlyphs" stroke="#111" stroke-width="0.55">6h</text>
<line x1="808.7" y1="674.2" x2="808.7" y2="684.2" stroke="#a0a0a0" stroke-width="1.2"/>
<text x="808.67" y="706.80" font-size="18.5" fill="#111" text-anchor="middle" font-weight="normal" textLength="21.5" lengthAdjust="spacingAndGlyphs" stroke="#111" stroke-width="0.55">7h</text>
<line x1="902.3" y1="674.2" x2="902.3" y2="684.2" stroke="#a0a0a0" stroke-width="1.2"/>
<text x="902.33" y="706.80" font-size="18.5" fill="#111" text-anchor="middle" font-weight="normal" textLength="21.5" lengthAdjust="spacingAndGlyphs" stroke="#111" stroke-width="0.55">8h</text>
<line x1="996.0" y1="674.2" x2="996.0" y2="684.2" stroke="#a0a0a0" stroke-width="1.2"/>
<text x="996.00" y="706.80" font-size="18.5" fill="#111" text-anchor="middle" font-weight="normal" textLength="21.5" lengthAdjust="spacingAndGlyphs" stroke="#111" stroke-width="0.55">9h</text>
<line x1="1089.7" y1="674.2" x2="1089.7" y2="684.2" stroke="#a0a0a0" stroke-width="1.2"/>
<text x="1089.67" y="706.80" font-size="18.5" fill="#111" text-anchor="middle" font-weight="normal" textLength="33.5" lengthAdjust="spacingAndGlyphs" stroke="#111" stroke-width="0.55">10h</text>
<line x1="1183.3" y1="674.2" x2="1183.3" y2="684.2" stroke="#a0a0a0" stroke-width="1.2"/>
<text x="1183.33" y="706.80" font-size="18.5" fill="#111" text-anchor="middle" font-weight="normal" textLength="33.5" lengthAdjust="spacingAndGlyphs" stroke="#111" stroke-width="0.55">11h</text>
<line x1="1277.0" y1="674.2" x2="1277.0" y2="684.2" stroke="#a0a0a0" stroke-width="1.2"/>
<text x="1277.00" y="706.80" font-size="18.5" fill="#111" text-anchor="middle" font-weight="normal" textLength="33.5" lengthAdjust="spacingAndGlyphs" stroke="#111" stroke-width="0.55">12h</text>
<line x1="1370.7" y1="674.2" x2="1370.7" y2="684.2" stroke="#a0a0a0" stroke-width="1.2"/>
<text x="1370.67" y="706.80" font-size="18.5" fill="#111" text-anchor="middle" font-weight="normal" textLength="33.5" lengthAdjust="spacingAndGlyphs" stroke="#111" stroke-width="0.55">13h</text>
<line x1="1464.3" y1="674.2" x2="1464.3" y2="684.2" stroke="#a0a0a0" stroke-width="1.2"/>
<text x="1464.33" y="706.80" font-size="18.5" fill="#111" text-anchor="middle" font-weight="normal" textLength="33.5" lengthAdjust="spacingAndGlyphs" stroke="#111" stroke-width="0.55">14h</text>
<line x1="1558.0" y1="674.2" x2="1558.0" y2="684.2" stroke="#a0a0a0" stroke-width="1.2"/>
<text x="1558.00" y="706.80" font-size="18.5" fill="#111" text-anchor="middle" font-weight="normal" textLength="33.5" lengthAdjust="spacingAndGlyphs" stroke="#111" stroke-width="0.55">15h</text>
<line x1="1651.7" y1="674.2" x2="1651.7" y2="684.2" stroke="#a0a0a0" stroke-width="1.2"/>
<text x="1651.67" y="706.80" font-size="18.5" fill="#111" text-anchor="middle" font-weight="normal" textLength="33.5" lengthAdjust="spacingAndGlyphs" stroke="#111" stroke-width="0.55">16h</text>
<line x1="1745.3" y1="674.2" x2="1745.3" y2="684.2" stroke="#a0a0a0" stroke-width="1.2"/>
<text x="1745.33" y="706.80" font-size="18.5" fill="#111" text-anchor="middle" font-weight="normal" textLength="33.5" lengthAdjust="spacingAndGlyphs" stroke="#111" stroke-width="0.55">17h</text>
<line x1="1839.0" y1="674.2" x2="1839.0" y2="684.2" stroke="#a0a0a0" stroke-width="1.2"/>
<text x="1839.00" y="706.80" font-size="18.5" fill="#111" text-anchor="middle" font-weight="normal" textLength="33.5" lengthAdjust="spacingAndGlyphs" stroke="#111" stroke-width="0.55">18h</text>
<line x1="1932.7" y1="674.2" x2="1932.7" y2="684.2" stroke="#a0a0a0" stroke-width="1.2"/>
<text x="1932.67" y="706.80" font-size="18.5" fill="#111" text-anchor="middle" font-weight="normal" textLength="33.5" lengthAdjust="spacingAndGlyphs" stroke="#111" stroke-width="0.55">19h</text>
<line x1="2026.3" y1="674.2" x2="2026.3" y2="684.2" stroke="#a0a0a0" stroke-width="1.2"/>
<text x="2026.33" y="706.80" font-size="18.5" fill="#111" text-anchor="middle" font-weight="normal" textLength="33.5" lengthAdjust="spacingAndGlyphs" stroke="#111" stroke-width="0.55">20h</text>
<line x1="2120.0" y1="674.2" x2="2120.0" y2="684.2" stroke="#a0a0a0" stroke-width="1.2"/>
<text x="2120.00" y="706.80" font-size="18.5" fill="#111" text-anchor="middle" font-weight="normal" textLength="33.5" lengthAdjust="spacingAndGlyphs" stroke="#111" stroke-width="0.55">21h</text>
<line x1="2213.7" y1="674.2" x2="2213.7" y2="684.2" stroke="#a0a0a0" stroke-width="1.2"/>
<text x="2213.67" y="706.80" font-size="18.5" fill="#111" text-anchor="middle" font-weight="normal" textLength="33.5" lengthAdjust="spacingAndGlyphs" stroke="#111" stroke-width="0.55">22h</text>
<line x1="2307.3" y1="674.2" x2="2307.3" y2="684.2" stroke="#a0a0a0" stroke-width="1.2"/>
<text x="2307.33" y="706.80" font-size="18.5" fill="#111" text-anchor="middle" font-weight="normal" textLength="33.5" lengthAdjust="spacingAndGlyphs" stroke="#111" stroke-width="0.55">23h</text>
<line x1="2401.0" y1="674.2" x2="2401.0" y2="684.2" stroke="#a0a0a0" stroke-width="1.2"/>
<text x="2401.00" y="706.80" font-size="18.5" fill="#111" text-anchor="middle" font-weight="normal" textLength="21.5" lengthAdjust="spacingAndGlyphs" stroke="#111" stroke-width="0.55">0h</text>
<text x="0.00" y="0.00" font-size="23.5" fill="#333" text-anchor="middle" font-weight="normal" textLength="29.5" lengthAdjust="spacingAndGlyphs" transform="translate(86.2,370) rotate(-90)">kW</text>
<rect x="176.50" y="49.20" width="481.50" height="77.50" fill="#0b0b1a" />
<text x="188.40" y="109.80" font-size="58" fill="url(#eco)" text-anchor="start" font-weight="bold" textLength="82.5" lengthAdjust="spacingAndGlyphs" >éco</text>
<text x="272.50" y="109.80" font-size="58" fill="#ffffff" text-anchor="start" font-weight="bold" textLength="100.5" lengthAdjust="spacingAndGlyphs" >watt</text>
<line x1="300.5" y1="107" x2="314" y2="67" stroke="#fff" stroke-width="5.5" stroke-linecap="round"/>
<ellipse cx="433.8" cy="88.8" rx="26" ry="28" fill="#00b4e1"/>
<text x="434.50" y="96.80" font-size="23" fill="#ffffff" text-anchor="middle" font-weight="normal" textLength="32.0" lengthAdjust="spacingAndGlyphs" >Rte</text>
<line x1="421" y1="89" x2="447" y2="89" stroke="#fff" stroke-width="1.2"/>
<text x="468.60" y="79.60" font-size="11.3" fill="#00a8d6" text-anchor="start" font-weight="normal" >Le réseau</text>
<text x="468.60" y="92.80" font-size="11.3" fill="#00a8d6" text-anchor="start" font-weight="normal" >de transport</text>
<text x="468.60" y="106.00" font-size="11.3" fill="#00a8d6" text-anchor="start" font-weight="normal" >d’électricité</text>
<rect x="546.20" y="61.40" width="100.80" height="55.90" fill="#ffffff" />
<rect x="553.00" y="68.70" width="6.50" height="7.00" fill="#2b3a8f" />
<rect x="559.50" y="68.70" width="5.00" height="7.00" fill="#e8e8ee" />
<rect x="564.50" y="68.70" width="7.50" height="7.00" fill="#e1000f" />
<text x="553.00" y="85.30" font-size="7.6" fill="#1e1e1e" text-anchor="start" font-weight="bold" textLength="43.8" lengthAdjust="spacingAndGlyphs" >RÉPUBLIQUE</text>
<text x="553.00" y="92.80" font-size="7.6" fill="#1e1e1e" text-anchor="start" font-weight="bold" textLength="41.0" lengthAdjust="spacingAndGlyphs" >FRANÇAISE</text>
<text x="553.00" y="101.00" font-size="4.5" fill="#555" text-anchor="start" font-weight="normal" font-style="italic">Liberté</text>
<text x="553.00" y="106.00" font-size="4.5" fill="#555" text-anchor="start" font-weight="normal" font-style="italic">Égalité</text>
<text x="553.00" y="111.00" font-size="4.5" fill="#555" text-anchor="start" font-weight="normal" font-style="italic">Fraternité</text>
<rect x="607.4" y="66.5" width="34.3" height="45" fill="#fff" stroke="#4a78c8" stroke-width="1"/>
<text x="624.50" y="76.00" font-size="6" fill="#e0242a" text-anchor="middle" font-weight="bold" textLength="26.0" lengthAdjust="spacingAndGlyphs" >ADEME</text>
<circle cx="624.3" cy="86.9" r="8.6" fill="#2a55a8"/>
<path d="M620,82 q3,-2 6,1 q-1,3 -4,4 q2,3 0,6 q-3,-2 -3,-5 z" fill="#8fb0e0" opacity="0.7"/>
<rect x="612.50" y="100.00" width="24.00" height="1.10" fill="#ef8f96" />
<rect x="612.50" y="103.00" width="24.00" height="1.10" fill="#ef8f96" />
<rect x="612.50" y="106.00" width="24.00" height="1.10" fill="#ef8f96" />
<rect x="169.30" y="135.40" width="490.70" height="123.20" fill="#d9d9d9" />
<rect x="172.40" y="138.50" width="116.50" height="50.70" fill="#f2f2f2" />
<rect x="172.40" y="194.40" width="116.50" height="56.80" fill="#f7f7f7" />
<use href="#wave" x="180.2" y="194.9"/>
<text x="230.65" y="175.20" font-size="33" fill="#111" text-anchor="middle" font-weight="normal" >J</text>
<rect x="294.60" y="138.50" width="116.40" height="50.70" fill="#f2f2f2" />
<rect x="294.60" y="194.40" width="116.40" height="56.80" fill="#f7f7f7" />
<use href="#wave" x="302.0" y="196.0"/>
<text x="320.40" y="175.20" font-size="33" fill="#111" text-anchor="middle" font-weight="normal" >J</text>
<text x="353.80" y="175.20" font-size="30" fill="#111" text-anchor="middle" font-weight="normal" >+</text>
<text x="384.80" y="175.20" font-size="33" fill="#111" text-anchor="middle" font-weight="normal" >1</text>
<rect x="416.50" y="138.50" width="116.50" height="50.70" fill="#f2f2f2" />
<rect x="416.50" y="194.40" width="116.50" height="56.80" fill="#f7f7f7" />
<use href="#wave" x="424.0" y="196.0"/>
<text x="442.35" y="175.20" font-size="33" fill="#111" text-anchor="middle" font-weight="normal" >J</text>
<text x="475.75" y="175.20" font-size="30" fill="#111" text-anchor="middle" font-weight="normal" >+</text>
<text x="506.75" y="175.20" font-size="33" fill="#111" text-anchor="middle" font-weight="bold" >2</text>
<rect x="538.60" y="138.50" width="116.80" height="50.70" fill="#f2f2f2" />
<rect x="538.60" y="194.40" width="116.80" height="56.80" fill="#f7f7f7" />
<use href="#wave" x="544.2" y="196.0"/>
<text x="564.60" y="175.20" font-size="33" fill="#111" text-anchor="middle" font-weight="normal" >J</text>
<text x="598.00" y="175.20" font-size="30" fill="#111" text-anchor="middle" font-weight="normal" >+</text>
<text x="629.00" y="175.20" font-size="33" fill="#111" text-anchor="middle" font-weight="normal" stroke="#111" stroke-width="0.8">3</text>
<path d="M1990.3,52 H2406 V92 Q2406,98 2400,98 H1990.3 Z" fill="#fff"/>
<text x="2112.20" y="89.40" font-size="25" fill="#111" text-anchor="start" font-weight="bold" textLength="172.4" lengthAdjust="spacingAndGlyphs" >LHB-site-L692</text>
<rect x="1991.8" y="108.3" width="412.2" height="57.0" rx="9.5" fill="#fff" stroke="#7f7f7f" stroke-width="3"/>
<text x="2052.40" y="147.70" font-size="27.5" fill="#111" text-anchor="start" font-weight="normal" textLength="311.1" lengthAdjust="spacingAndGlyphs" >Consommation: 273 kWh</text>
<rect x="1991.8" y="178.2" width="412.2" height="57.0" rx="9.5" fill="#fff" stroke="#7f7f7f" stroke-width="3"/>
<text x="2114.30" y="217.70" font-size="27.5" fill="#111" text-anchor="start" font-weight="normal" textLength="187.7" lengthAdjust="spacingAndGlyphs" xml:space="preserve">P Max :  49 kW</text>
<rect x="1991.8" y="248.8" width="412.2" height="57.1" rx="9.5" fill="#fff" stroke="#7f7f7f" stroke-width="3"/>
<text x="2129.20" y="287.60" font-size="27.5" fill="#111" text-anchor="start" font-weight="normal" textLength="158.0" lengthAdjust="spacingAndGlyphs" >P min : 1 kW</text>
<rect x="1047.2" y="542.5" width="522.8" height="69.6" rx="8" fill="#fff" fill-opacity="0.9"/>
<text x="1171.90" y="588.80" font-size="29.5" fill="#111" text-anchor="start" font-weight="bold" textLength="283.8" lengthAdjust="spacingAndGlyphs" >jeudi 16 avril 2026</text>
<rect x="155.7" y="815.2" width="2260.6000000000004" height="505.0" fill="#fff" filter="url(#psh)"/>
<rect x="155.70" y="815.20" width="322.94" height="505.00" fill="#f2f2f2" />
<rect x="801.59" y="815.20" width="322.94" height="505.00" fill="#f2f2f2" />
<rect x="1447.47" y="815.20" width="322.94" height="505.00" fill="#f2f2f2" />
<rect x="2093.36" y="815.20" width="322.94" height="505.00" fill="#f2f2f2" />
<line x1="478.5" y1="815.2" x2="478.5" y2="1320.2" stroke="#d4d4d4" stroke-width="1"/>
<line x1="801.5" y1="815.2" x2="801.5" y2="1320.2" stroke="#d4d4d4" stroke-width="1"/>
<line x1="1124.5" y1="815.2" x2="1124.5" y2="1320.2" stroke="#d4d4d4" stroke-width="1"/>
<line x1="1447.5" y1="815.2" x2="1447.5" y2="1320.2" stroke="#d4d4d4" stroke-width="1"/>
<line x1="1770.5" y1="815.2" x2="1770.5" y2="1320.2" stroke="#d4d4d4" stroke-width="1"/>
<line x1="2093.5" y1="815.2" x2="2093.5" y2="1320.2" stroke="#d4d4d4" stroke-width="1"/>
<rect x="155.70" y="1248.06" width="2260.60" height="72.14" fill="#f2f2f2" />
<rect x="155.70" y="1103.77" width="2260.60" height="72.14" fill="#f2f2f2" />
<rect x="155.70" y="959.49" width="2260.60" height="72.14" fill="#f2f2f2" />
<rect x="155.70" y="815.20" width="2260.60" height="72.14" fill="#f2f2f2" />
<line x1="155.7" y1="1247.5" x2="2416.3" y2="1247.5" stroke="#c4c4c4" stroke-width="1"/>
<line x1="155.7" y1="1175.5" x2="2416.3" y2="1175.5" stroke="#c4c4c4" stroke-width="1"/>
<line x1="155.7" y1="1103.5" x2="2416.3" y2="1103.5" stroke="#c4c4c4" stroke-width="1"/>
<line x1="155.7" y1="1031.5" x2="2416.3" y2="1031.5" stroke="#c4c4c4" stroke-width="1"/>
<line x1="155.7" y1="959.5" x2="2416.3" y2="959.5" stroke="#c4c4c4" stroke-width="1"/>
<line x1="155.7" y1="887.5" x2="2416.3" y2="887.5" stroke="#c4c4c4" stroke-width="1"/>
<line x1="155.7" y1="815.5" x2="2416.3" y2="815.5" stroke="#c4c4c4" stroke-width="1"/>
<rect x="155.70" y="1305.77" width="14.58" height="14.43" fill="#9fecc3"/><rect x="170.28" y="1312.99" width="1.12" height="7.21" fill="#9fecc3"/><rect x="171.40" y="1305.77" width="3.36" height="14.43" fill="#9fecc3"/><rect x="174.76" y="1312.99" width="1.12" height="7.21" fill="#9fecc3"/><rect x="175.88" y="1305.77" width="2.24" height="14.43" fill="#9fecc3"/><rect x="178.13" y="1312.99" width="1.12" height="7.21" fill="#9fecc3"/><rect x="179.25" y="1305.77" width="1.12" height="14.43" fill="#9fecc3"/><rect x="180.37" y="1312.99" width="1.12" height="7.21" fill="#9fecc3"/><rect x="181.49" y="1305.77" width="4.49" height="14.43" fill="#9fecc3"/><rect x="185.98" y="1312.99" width="1.12" height="7.21" fill="#9fecc3"/><rect x="187.10" y="1305.77" width="15.70" height="14.43" fill="#9fecc3"/><rect x="202.80" y="1312.99" width="1.12" height="7.21" fill="#9fecc3"/><rect x="203.92" y="1305.77" width="1.12" height="14.43" fill="#9fecc3"/><rect x="205.04" y="1298.56" width="3.36" height="21.64" fill="#9fecc3"/><rect x="208.40" y="1305.77" width="2.24" height="14.43" fill="#9fecc3"/><rect x="210.65" y="1298.56" width="1.12" height="21.64" fill="#9fecc3"/><rect x="211.77" y="1305.77" width="1.12" height="14.43" fill="#9fecc3"/><rect x="212.89" y="1298.56" width="2.24" height="21.64" fill="#9fecc3"/><rect x="215.13" y="1305.77" width="1.12" height="14.43" fill="#9fecc3"/><rect x="216.25" y="1298.56" width="1.12" height="21.64" fill="#9fecc3"/><rect x="217.37" y="1305.77" width="6.73" height="14.43" fill="#9fecc3"/><rect x="224.10" y="1298.56" width="13.46" height="21.64" fill="#9fecc3"/><rect x="237.56" y="1305.77" width="3.36" height="14.43" fill="#24906f"/><rect x="240.92" y="1291.34" width="1.12" height="28.86" fill="#24906f"/><rect x="242.04" y="1298.56" width="3.36" height="21.64" fill="#24906f"/><rect x="245.41" y="1233.63" width="2.24" height="86.57" fill="#24906f"/><rect x="247.65" y="1197.56" width="2.24" height="122.64" fill="#24906f"/><rect x="249.89" y="1190.34" width="2.24" height="129.86" fill="#24906f"/><rect x="252.13" y="1197.56" width="1.12" height="122.64" fill="#24906f"/><rect x="253.26" y="1053.27" width="1.12" height="266.93" fill="#24906f"/><rect x="254.38" y="1002.77" width="1.12" height="317.43" fill="#24906f"/><rect x="255.50" y="945.06" width="4.49" height="375.14" fill="#24906f"/><rect x="259.98" y="901.77" width="2.24" height="418.43" fill="#24906f"/><rect x="262.23" y="988.34" width="1.12" height="331.86" fill="#24906f"/><rect x="263.35" y="1009.99" width="1.12" height="310.21" fill="#24906f"/><rect x="264.47" y="1197.56" width="1.12" height="122.64" fill="#24906f"/><rect x="265.59" y="1089.34" width="1.12" height="230.86" fill="#24906f"/><rect x="266.71" y="1024.41" width="1.12" height="295.79" fill="#24906f"/><rect x="267.83" y="973.91" width="2.24" height="346.29" fill="#24906f"/><rect x="270.08" y="1154.27" width="2.24" height="165.93" fill="#24906f"/><rect x="272.32" y="1233.63" width="2.24" height="86.57" fill="#24906f"/><rect x="274.56" y="1226.41" width="1.12" height="93.79" fill="#24906f"/><rect x="275.68" y="1233.63" width="2.24" height="86.57" fill="#24906f"/><rect x="277.92" y="1190.34" width="1.12" height="129.86" fill="#24906f"/><rect x="279.05" y="1096.56" width="2.24" height="223.64" fill="#24906f"/><rect x="281.29" y="1082.13" width="1.12" height="238.07" fill="#24906f"/><rect x="282.41" y="1024.41" width="1.12" height="295.79" fill="#24906f"/><rect x="283.53" y="1183.13" width="2.24" height="137.07" fill="#24906f"/><rect x="285.77" y="1197.56" width="1.12" height="122.64" fill="#24906f"/><rect x="286.90" y="1240.84" width="2.24" height="79.36" fill="#24906f"/><rect x="289.14" y="1233.63" width="1.12" height="86.57" fill="#24906f"/><rect x="290.26" y="1053.27" width="2.24" height="266.93" fill="#24906f"/><rect x="292.50" y="1204.77" width="2.24" height="115.43" fill="#24906f"/><rect x="294.74" y="1017.20" width="1.12" height="303.00" fill="#24906f"/><rect x="295.87" y="1009.99" width="2.24" height="310.21" fill="#24906f"/><rect x="298.11" y="1046.06" width="2.24" height="274.14" fill="#24906f"/><rect x="300.35" y="1089.34" width="1.12" height="230.86" fill="#24906f"/><rect x="301.47" y="1226.41" width="2.24" height="93.79" fill="#24906f"/><rect x="303.72" y="1197.56" width="1.12" height="122.64" fill="#24906f"/><rect x="304.84" y="1240.84" width="4.49" height="79.36" fill="#24906f"/><rect x="309.32" y="1226.41" width="2.24" height="93.79" fill="#24906f"/><rect x="311.56" y="1240.84" width="1.12" height="79.36" fill="#24906f"/><rect x="312.69" y="1233.63" width="2.24" height="86.57" fill="#24906f"/><rect x="314.93" y="1243.73" width="2.24" height="76.47" fill="#24906f"/><rect x="317.17" y="1262.49" width="3.36" height="57.71" fill="#24906f"/><rect x="320.54" y="1269.70" width="2.24" height="50.50" fill="#24906f"/><rect x="322.78" y="1262.49" width="4.49" height="57.71" fill="#24906f"/><rect x="327.26" y="1017.20" width="1.12" height="303.00" fill="#24906f"/><rect x="328.38" y="1089.34" width="2.24" height="230.86" fill="#24906f"/><rect x="330.63" y="937.84" width="2.24" height="382.36" fill="#24906f"/><rect x="332.87" y="844.06" width="1.12" height="476.14" fill="#24906f"/><rect x="333.99" y="1154.27" width="2.24" height="165.93" fill="#24906f"/><rect x="336.23" y="1255.27" width="1.12" height="64.93" fill="#24906f"/><rect x="337.36" y="1118.20" width="2.24" height="202.00" fill="#24906f"/><rect x="339.60" y="1110.99" width="4.49" height="209.21" fill="#24906f"/><rect x="344.08" y="1197.56" width="2.24" height="122.64" fill="#24906f"/><rect x="346.33" y="1255.27" width="1.12" height="64.93" fill="#24906f"/><rect x="347.45" y="1226.41" width="2.24" height="93.79" fill="#24906f"/><rect x="349.69" y="1240.84" width="1.12" height="79.36" fill="#24906f"/><rect x="350.81" y="1262.49" width="6.73" height="57.71" fill="#24906f"/><rect x="357.54" y="1269.70" width="4.49" height="50.50" fill="#24906f"/><rect x="362.02" y="1262.49" width="2.24" height="57.71" fill="#24906f"/><rect x="364.27" y="1269.70" width="2.24" height="50.50" fill="#24906f"/><rect x="366.51" y="1002.77" width="1.12" height="317.43" fill="#24906f"/><rect x="367.63" y="872.91" width="2.24" height="447.29" fill="#24906f"/><rect x="369.87" y="1096.56" width="1.12" height="223.64" fill="#24906f"/><rect x="371.00" y="1262.49" width="2.24" height="57.71" fill="#24906f"/><rect x="373.24" y="1219.20" width="1.12" height="101.00" fill="#24906f"/><rect x="374.36" y="1233.63" width="2.24" height="86.57" fill="#24906f"/><rect x="376.60" y="1255.27" width="2.24" height="64.93" fill="#24906f"/><rect x="378.84" y="1269.70" width="1.12" height="50.50" fill="#24906f"/><rect x="379.97" y="1298.56" width="2.24" height="21.64" fill="#24906f"/><rect x="382.21" y="1312.99" width="2.24" height="7.21" fill="#24906f"/><rect x="384.45" y="1312.99" width="1.12" height="7.21" fill="#9fecc3"/><rect x="385.57" y="1305.77" width="7.85" height="14.43" fill="#9fecc3"/><rect x="393.42" y="1284.13" width="2.24" height="36.07" fill="#9fecc3"/><rect x="395.66" y="1305.77" width="5.61" height="14.43" fill="#9fecc3"/><rect x="401.27" y="1298.56" width="2.24" height="21.64" fill="#9fecc3"/><rect x="403.51" y="1305.77" width="3.36" height="14.43" fill="#9fecc3"/><rect x="406.88" y="1298.56" width="3.36" height="21.64" fill="#9fecc3"/><rect x="410.24" y="1305.77" width="2.24" height="14.43" fill="#9fecc3"/><rect x="412.48" y="1298.56" width="2.24" height="21.64" fill="#9fecc3"/><rect x="414.73" y="1305.77" width="10.09" height="14.43" fill="#9fecc3"/><rect x="424.82" y="1312.99" width="1.12" height="7.21" fill="#9fecc3"/><rect x="425.94" y="1305.77" width="5.61" height="14.43" fill="#9fecc3"/><rect x="431.55" y="1312.99" width="4.49" height="7.21" fill="#9fecc3"/><rect x="436.03" y="1305.77" width="16.82" height="14.43" fill="#9fecc3"/><rect x="452.85" y="1312.99" width="1.12" height="7.21" fill="#9fecc3"/><rect x="453.97" y="1305.77" width="6.73" height="14.43" fill="#9fecc3"/><rect x="460.70" y="1312.99" width="2.24" height="7.21" fill="#9fecc3"/><rect x="462.94" y="1305.77" width="6.73" height="14.43" fill="#9fecc3"/><rect x="469.67" y="1312.99" width="1.12" height="7.21" fill="#9fecc3"/><rect x="470.79" y="1305.77" width="2.24" height="14.43" fill="#9fecc3"/><rect x="473.04" y="1298.56" width="1.12" height="21.64" fill="#9fecc3"/><rect x="474.16" y="1305.77" width="5.61" height="14.43" fill="#9fecc3"/><rect x="479.76" y="1312.99" width="2.24" height="7.21" fill="#9fecc3"/><rect x="482.01" y="1305.77" width="10.09" height="14.43" fill="#9fecc3"/><rect x="492.10" y="1312.99" width="5.61" height="7.21" fill="#9fecc3"/><rect x="497.71" y="1305.77" width="10.09" height="14.43" fill="#9fecc3"/><rect x="507.80" y="1312.99" width="1.12" height="7.21" fill="#9fecc3"/><rect x="508.92" y="1305.77" width="1.12" height="14.43" fill="#9fecc3"/><rect x="510.04" y="1312.99" width="3.36" height="7.21" fill="#9fecc3"/><rect x="513.40" y="1305.77" width="6.73" height="14.43" fill="#9fecc3"/><rect x="520.13" y="1312.99" width="2.24" height="7.21" fill="#9fecc3"/><rect x="522.37" y="1305.77" width="2.24" height="14.43" fill="#9fecc3"/><rect x="524.62" y="1298.56" width="2.24" height="21.64" fill="#9fecc3"/><rect x="526.86" y="1305.77" width="25.79" height="14.43" fill="#9fecc3"/><rect x="552.65" y="1298.56" width="4.49" height="21.64" fill="#9fecc3"/><rect x="557.14" y="1305.77" width="2.24" height="14.43" fill="#9fecc3"/><rect x="559.38" y="1298.56" width="1.12" height="21.64" fill="#9fecc3"/><rect x="560.50" y="1305.77" width="1.12" height="14.43" fill="#9fecc3"/><rect x="561.62" y="1298.56" width="1.12" height="21.64" fill="#9fecc3"/><rect x="562.74" y="1305.77" width="2.24" height="14.43" fill="#9fecc3"/><rect x="564.99" y="1298.56" width="8.97" height="21.64" fill="#9fecc3"/><rect x="573.96" y="1305.77" width="1.12" height="14.43" fill="#9fecc3"/><rect x="575.08" y="1298.56" width="3.36" height="21.64" fill="#9fecc3"/><rect x="578.44" y="1291.34" width="5.61" height="28.86" fill="#9fecc3"/><rect x="584.05" y="1298.56" width="3.36" height="21.64" fill="#9fecc3"/><rect x="587.41" y="1305.77" width="14.58" height="14.43" fill="#9fecc3"/><rect x="601.99" y="1298.56" width="7.85" height="21.64" fill="#9fecc3"/><rect x="609.84" y="1305.77" width="15.70" height="14.43" fill="#9fecc3"/><rect x="625.54" y="1298.56" width="1.12" height="21.64" fill="#9fecc3"/><rect x="626.66" y="1305.77" width="21.31" height="14.43" fill="#9fecc3"/><rect x="647.96" y="1298.56" width="2.24" height="21.64" fill="#9fecc3"/><rect x="650.21" y="1305.77" width="4.49" height="14.43" fill="#9fecc3"/><rect x="654.69" y="1298.56" width="8.97" height="21.64" fill="#9fecc3"/><rect x="663.66" y="1291.34" width="2.24" height="28.86" fill="#9fecc3"/><rect x="665.90" y="1298.56" width="22.43" height="21.64" fill="#9fecc3"/><rect x="688.33" y="1291.34" width="1.12" height="28.86" fill="#9fecc3"/><rect x="689.45" y="1298.56" width="4.49" height="21.64" fill="#9fecc3"/><rect x="693.94" y="1312.99" width="2.24" height="7.21" fill="#9fecc3"/><rect x="696.18" y="1305.77" width="2.24" height="14.43" fill="#9fecc3"/><rect x="698.42" y="1298.56" width="2.24" height="21.64" fill="#9fecc3"/><rect x="700.67" y="1305.77" width="6.73" height="14.43" fill="#9fecc3"/><rect x="707.39" y="1312.99" width="1.12" height="7.21" fill="#9fecc3"/><rect x="708.52" y="1305.77" width="12.33" height="14.43" fill="#9fecc3"/><rect x="720.85" y="1312.99" width="1.12" height="7.21" fill="#9fecc3"/><rect x="721.97" y="1305.77" width="1.12" height="14.43" fill="#9fecc3"/><rect x="723.09" y="1312.99" width="1.12" height="7.21" fill="#9fecc3"/><rect x="724.21" y="1305.77" width="2.24" height="14.43" fill="#9fecc3"/><rect x="726.46" y="1312.99" width="1.12" height="7.21" fill="#9fecc3"/><rect x="727.58" y="1305.77" width="3.36" height="14.43" fill="#9fecc3"/><rect x="730.94" y="1312.99" width="1.12" height="7.21" fill="#9fecc3"/><rect x="732.06" y="1305.77" width="1.12" height="14.43" fill="#9fecc3"/><rect x="733.18" y="1312.99" width="1.12" height="7.21" fill="#9fecc3"/><rect x="734.31" y="1305.77" width="12.33" height="14.43" fill="#9fecc3"/><rect x="746.64" y="1312.99" width="2.24" height="7.21" fill="#9fecc3"/><rect x="748.88" y="1305.77" width="8.97" height="14.43" fill="#9fecc3"/><rect x="757.85" y="1312.99" width="2.24" height="7.21" fill="#9fecc3"/><rect x="760.10" y="1291.34" width="3.36" height="28.86" fill="#9fecc3"/><rect x="763.46" y="1298.56" width="14.58" height="21.64" fill="#9fecc3"/><rect x="778.04" y="1291.34" width="3.36" height="28.86" fill="#9fecc3"/><rect x="781.40" y="1284.13" width="6.73" height="36.07" fill="#9fecc3"/><rect x="788.13" y="1291.34" width="6.73" height="28.86" fill="#9fecc3"/><rect x="794.86" y="1284.13" width="1.12" height="36.07" fill="#9fecc3"/><rect x="795.98" y="1291.34" width="4.49" height="28.86" fill="#9fecc3"/><rect x="800.46" y="1298.56" width="1.12" height="21.64" fill="#9fecc3"/><rect x="801.59" y="1291.34" width="3.36" height="28.86" fill="#9fecc3"/><rect x="804.95" y="1298.56" width="3.36" height="21.64" fill="#9fecc3"/><rect x="808.31" y="1291.34" width="1.12" height="28.86" fill="#9fecc3"/><rect x="809.44" y="1298.56" width="3.36" height="21.64" fill="#9fecc3"/><rect x="812.80" y="1291.34" width="5.61" height="28.86" fill="#9fecc3"/><rect x="818.41" y="1298.56" width="1.12" height="21.64" fill="#9fecc3"/><rect x="819.53" y="1291.34" width="1.12" height="28.86" fill="#9fecc3"/><rect x="820.65" y="1298.56" width="3.36" height="21.64" fill="#9fecc3"/><rect x="824.01" y="1291.34" width="2.24" height="28.86" fill="#9fecc3"/><rect x="826.25" y="1298.56" width="2.24" height="21.64" fill="#9fecc3"/><rect x="828.50" y="1291.34" width="3.36" height="28.86" fill="#9fecc3"/><rect x="831.86" y="1284.13" width="1.12" height="36.07" fill="#9fecc3"/><rect x="832.98" y="1291.34" width="1.12" height="28.86" fill="#9fecc3"/><rect x="834.10" y="1284.13" width="3.36" height="36.07" fill="#9fecc3"/><rect x="837.47" y="1291.34" width="1.12" height="28.86" fill="#9fecc3"/><rect x="838.59" y="1284.13" width="1.12" height="36.07" fill="#9fecc3"/><rect x="839.71" y="1291.34" width="2.24" height="28.86" fill="#9fecc3"/><rect x="841.95" y="1284.13" width="3.36" height="36.07" fill="#9fecc3"/><rect x="845.32" y="1291.34" width="4.49" height="28.86" fill="#9fecc3"/><rect x="849.80" y="1284.13" width="3.36" height="36.07" fill="#9fecc3"/><rect x="853.17" y="1291.34" width="1.12" height="28.86" fill="#9fecc3"/><rect x="854.29" y="1284.13" width="1.12" height="36.07" fill="#9fecc3"/><rect x="855.41" y="1291.34" width="1.12" height="28.86" fill="#9fecc3"/><rect x="856.53" y="1284.13" width="3.36" height="36.07" fill="#9fecc3"/><rect x="859.89" y="1291.34" width="3.36" height="28.86" fill="#9fecc3"/><rect x="863.26" y="1284.13" width="10.09" height="36.07" fill="#9fecc3"/><rect x="873.35" y="1276.91" width="4.49" height="43.29" fill="#9fecc3"/><rect x="877.84" y="1269.70" width="1.12" height="50.50" fill="#9fecc3"/><rect x="878.96" y="1276.91" width="3.36" height="43.29" fill="#9fecc3"/><rect x="882.32" y="1284.13" width="6.73" height="36.07" fill="#9fecc3"/><rect x="889.05" y="1276.91" width="2.24" height="43.29" fill="#9fecc3"/><rect x="891.29" y="1284.13" width="15.70" height="36.07" fill="#9fecc3"/><rect x="906.99" y="1276.91" width="4.49" height="43.29" fill="#9fecc3"/><rect x="911.48" y="1291.34" width="1.12" height="28.86" fill="#9fecc3"/><rect x="912.60" y="1284.13" width="5.61" height="36.07" fill="#9fecc3"/><rect x="918.20" y="1291.34" width="1.12" height="28.86" fill="#9fecc3"/><rect x="919.33" y="1284.13" width="1.12" height="36.07" fill="#9fecc3"/><rect x="920.45" y="1291.34" width="1.12" height="28.86" fill="#9fecc3"/><rect x="921.57" y="1284.13" width="2.24" height="36.07" fill="#9fecc3"/><rect x="923.81" y="1291.34" width="1.12" height="28.86" fill="#9fecc3"/><rect x="924.93" y="1284.13" width="2.24" height="36.07" fill="#9fecc3"/><rect x="927.17" y="1291.34" width="3.36" height="28.86" fill="#9fecc3"/><rect x="930.54" y="1298.56" width="5.61" height="21.64" fill="#9fecc3"/><rect x="936.15" y="1291.34" width="1.12" height="28.86" fill="#9fecc3"/><rect x="937.27" y="1298.56" width="1.12" height="21.64" fill="#9fecc3"/><rect x="938.39" y="1291.34" width="1.12" height="28.86" fill="#9fecc3"/><rect x="939.51" y="1298.56" width="2.24" height="21.64" fill="#9fecc3"/><rect x="941.75" y="1291.34" width="2.24" height="28.86" fill="#9fecc3"/><rect x="943.99" y="1305.77" width="1.12" height="14.43" fill="#9fecc3"/><rect x="945.12" y="1298.56" width="4.49" height="21.64" fill="#9fecc3"/><rect x="949.60" y="1305.77" width="2.24" height="14.43" fill="#9fecc3"/><rect x="951.84" y="1298.56" width="1.12" height="21.64" fill="#9fecc3"/><rect x="952.97" y="1305.77" width="1.12" height="14.43" fill="#9fecc3"/><rect x="954.09" y="1298.56" width="1.12" height="21.64" fill="#9fecc3"/><rect x="955.21" y="1305.77" width="1.12" height="14.43" fill="#9fecc3"/><rect x="956.33" y="1298.56" width="4.49" height="21.64" fill="#9fecc3"/><rect x="960.81" y="1305.77" width="1.12" height="14.43" fill="#9fecc3"/><rect x="961.94" y="1298.56" width="2.24" height="21.64" fill="#9fecc3"/><rect x="964.18" y="1305.77" width="1.12" height="14.43" fill="#9fecc3"/><rect x="965.30" y="1298.56" width="3.36" height="21.64" fill="#9fecc3"/><rect x="968.66" y="1291.34" width="2.24" height="28.86" fill="#9fecc3"/><rect x="970.91" y="1298.56" width="3.36" height="21.64" fill="#9fecc3"/><rect x="974.27" y="1312.99" width="2.24" height="7.21" fill="#9fecc3"/><rect x="976.51" y="1305.77" width="7.85" height="14.43" fill="#9fecc3"/><rect x="984.36" y="1312.99" width="1.12" height="7.21" fill="#9fecc3"/><rect x="985.48" y="1305.77" width="3.36" height="14.43" fill="#9fecc3"/><rect x="988.85" y="1312.99" width="1.12" height="7.21" fill="#9fecc3"/><rect x="989.97" y="1305.77" width="5.61" height="14.43" fill="#9fecc3"/><rect x="995.58" y="1312.99" width="3.36" height="7.21" fill="#9fecc3"/><rect x="998.94" y="1305.77" width="2.24" height="14.43" fill="#9fecc3"/><rect x="1001.18" y="1312.99" width="2.24" height="7.21" fill="#9fecc3"/><rect x="1003.43" y="1305.77" width="4.49" height="14.43" fill="#9fecc3"/><rect x="1007.91" y="1312.99" width="4.49" height="7.21" fill="#9fecc3"/><rect x="1012.40" y="1305.77" width="5.61" height="14.43" fill="#9fecc3"/><rect x="1018.00" y="1312.99" width="2.24" height="7.21" fill="#9fecc3"/><rect x="1020.24" y="1305.77" width="1.12" height="14.43" fill="#9fecc3"/><rect x="1021.37" y="1312.99" width="1.12" height="7.21" fill="#9fecc3"/><rect x="1022.49" y="1305.77" width="3.36" height="14.43" fill="#9fecc3"/><rect x="1025.85" y="1312.99" width="1.12" height="7.21" fill="#9fecc3"/><rect x="1026.97" y="1305.77" width="1.12" height="14.43" fill="#9fecc3"/><rect x="1028.09" y="1312.99" width="1.12" height="7.21" fill="#9fecc3"/><rect x="1029.22" y="1305.77" width="17.94" height="14.43" fill="#9fecc3"/><rect x="1047.16" y="1312.99" width="1.12" height="7.21" fill="#9fecc3"/><rect x="1048.28" y="1305.77" width="1.12" height="14.43" fill="#9fecc3"/><rect x="1049.40" y="1312.99" width="1.12" height="7.21" fill="#9fecc3"/><rect x="1050.52" y="1305.77" width="3.36" height="14.43" fill="#9fecc3"/><rect x="1053.88" y="1312.99" width="2.24" height="7.21" fill="#9fecc3"/><rect x="1056.13" y="1305.77" width="1.12" height="14.43" fill="#9fecc3"/><rect x="1057.25" y="1298.56" width="3.36" height="21.64" fill="#9fecc3"/><rect x="1060.61" y="1291.34" width="2.24" height="28.86" fill="#9fecc3"/><rect x="1062.86" y="1298.56" width="4.49" height="21.64" fill="#9fecc3"/><rect x="1067.34" y="1305.77" width="1.12" height="14.43" fill="#9fecc3"/><rect x="1068.46" y="1298.56" width="1.12" height="21.64" fill="#9fecc3"/><rect x="1069.58" y="1305.77" width="3.36" height="14.43" fill="#9fecc3"/><rect x="1072.95" y="1298.56" width="1.12" height="21.64" fill="#9fecc3"/><rect x="1074.07" y="1305.77" width="1.12" height="14.43" fill="#9fecc3"/><rect x="1075.19" y="1298.56" width="1.12" height="21.64" fill="#9fecc3"/><rect x="1076.31" y="1305.77" width="1.12" height="14.43" fill="#9fecc3"/><rect x="1077.43" y="1298.56" width="2.24" height="21.64" fill="#9fecc3"/><rect x="1079.68" y="1305.77" width="1.12" height="14.43" fill="#9fecc3"/><rect x="1080.80" y="1298.56" width="1.12" height="21.64" fill="#9fecc3"/><rect x="1081.92" y="1305.77" width="1.12" height="14.43" fill="#9fecc3"/><rect x="1083.04" y="1298.56" width="50.46" height="21.64" fill="#9fecc3"/><rect x="1133.50" y="1291.34" width="1.12" height="28.86" fill="#9fecc3"/><rect x="1134.62" y="1298.56" width="1.12" height="21.64" fill="#9fecc3"/><rect x="1135.74" y="1291.34" width="2.24" height="28.86" fill="#9fecc3"/><rect x="1137.98" y="1298.56" width="2.24" height="21.64" fill="#9fecc3"/><rect x="1140.23" y="1291.34" width="3.36" height="28.86" fill="#9fecc3"/><rect x="1143.59" y="1298.56" width="1.12" height="21.64" fill="#9fecc3"/><rect x="1144.71" y="1291.34" width="1.12" height="28.86" fill="#9fecc3"/><rect x="1145.83" y="1298.56" width="2.24" height="21.64" fill="#9fecc3"/><rect x="1148.08" y="1291.34" width="3.36" height="28.86" fill="#9fecc3"/><rect x="1151.44" y="1284.13" width="6.73" height="36.07" fill="#9fecc3"/><rect x="1158.17" y="1291.34" width="15.70" height="28.86" fill="#9fecc3"/><rect x="1173.87" y="1284.13" width="1.12" height="36.07" fill="#9fecc3"/><rect x="1174.99" y="1291.34" width="5.61" height="28.86" fill="#9fecc3"/><rect x="1180.60" y="1284.13" width="3.36" height="36.07" fill="#9fecc3"/><rect x="1183.96" y="1291.34" width="1.12" height="28.86" fill="#9fecc3"/><rect x="1185.08" y="1284.13" width="2.24" height="36.07" fill="#9fecc3"/><rect x="1187.32" y="1291.34" width="1.12" height="28.86" fill="#9fecc3"/><rect x="1188.44" y="1284.13" width="3.36" height="36.07" fill="#9fecc3"/><rect x="1191.81" y="1291.34" width="1.12" height="28.86" fill="#9fecc3"/><rect x="1192.93" y="1284.13" width="1.12" height="36.07" fill="#9fecc3"/><rect x="1194.05" y="1291.34" width="3.36" height="28.86" fill="#9fecc3"/><rect x="1197.41" y="1284.13" width="4.49" height="36.07" fill="#9fecc3"/><rect x="1201.90" y="1291.34" width="1.12" height="28.86" fill="#9fecc3"/><rect x="1203.02" y="1284.13" width="2.24" height="36.07" fill="#9fecc3"/><rect x="1205.26" y="1276.91" width="1.12" height="43.29" fill="#24906f"/><rect x="1206.39" y="1291.34" width="4.49" height="28.86" fill="#24906f"/><rect x="1210.87" y="1276.91" width="1.12" height="43.29" fill="#24906f"/><rect x="1211.99" y="1291.34" width="8.97" height="28.86" fill="#24906f"/><rect x="1220.96" y="1276.91" width="2.24" height="43.29" fill="#24906f"/><rect x="1223.21" y="1248.06" width="1.12" height="72.14" fill="#24906f"/><rect x="1224.33" y="1276.91" width="4.49" height="43.29" fill="#24906f"/><rect x="1228.81" y="1269.70" width="2.24" height="50.50" fill="#24906f"/><rect x="1231.05" y="1276.91" width="3.36" height="43.29" fill="#24906f"/><rect x="1234.42" y="1284.13" width="3.36" height="36.07" fill="#24906f"/><rect x="1237.78" y="1233.63" width="1.12" height="86.57" fill="#24906f"/><rect x="1238.90" y="1139.84" width="1.12" height="180.36" fill="#24906f"/><rect x="1240.03" y="1154.27" width="1.12" height="165.93" fill="#24906f"/><rect x="1241.15" y="1255.27" width="3.36" height="64.93" fill="#24906f"/><rect x="1244.51" y="1262.49" width="3.36" height="57.71" fill="#24906f"/><rect x="1247.87" y="1168.70" width="1.12" height="151.50" fill="#24906f"/><rect x="1249.00" y="1096.56" width="1.12" height="223.64" fill="#24906f"/><rect x="1250.12" y="1168.70" width="2.24" height="151.50" fill="#24906f"/><rect x="1252.36" y="1190.34" width="1.12" height="129.86" fill="#24906f"/><rect x="1253.48" y="1118.20" width="1.12" height="202.00" fill="#24906f"/><rect x="1254.60" y="1183.13" width="2.24" height="137.07" fill="#24906f"/><rect x="1256.85" y="1262.49" width="7.85" height="57.71" fill="#24906f"/><rect x="1264.69" y="1125.41" width="1.12" height="194.79" fill="#24906f"/><rect x="1265.82" y="1240.84" width="1.12" height="79.36" fill="#24906f"/><rect x="1266.94" y="1262.49" width="5.61" height="57.71" fill="#24906f"/><rect x="1272.54" y="1240.84" width="1.12" height="79.36" fill="#24906f"/><rect x="1273.67" y="1118.20" width="1.12" height="202.00" fill="#24906f"/><rect x="1274.79" y="1204.77" width="2.24" height="115.43" fill="#24906f"/><rect x="1277.03" y="1269.70" width="4.49" height="50.50" fill="#24906f"/><rect x="1281.51" y="1233.63" width="1.12" height="86.57" fill="#24906f"/><rect x="1282.64" y="1197.56" width="2.24" height="122.64" fill="#24906f"/><rect x="1284.88" y="1269.70" width="4.49" height="50.50" fill="#24906f"/><rect x="1289.36" y="1262.49" width="1.12" height="57.71" fill="#24906f"/><rect x="1290.49" y="1269.70" width="3.36" height="50.50" fill="#24906f"/><rect x="1293.85" y="1262.49" width="2.24" height="57.71" fill="#24906f"/><rect x="1296.09" y="1269.70" width="2.24" height="50.50" fill="#24906f"/><rect x="1298.33" y="1226.41" width="2.24" height="93.79" fill="#24906f"/><rect x="1300.58" y="1067.70" width="1.12" height="252.50" fill="#24906f"/><rect x="1301.70" y="1103.77" width="2.24" height="216.43" fill="#24906f"/><rect x="1303.94" y="1255.27" width="1.12" height="64.93" fill="#24906f"/><rect x="1305.06" y="1298.56" width="2.24" height="21.64" fill="#24906f"/><rect x="1307.31" y="1204.77" width="2.24" height="115.43" fill="#24906f"/><rect x="1309.55" y="1161.49" width="1.12" height="158.71" fill="#24906f"/><rect x="1310.67" y="1248.06" width="2.24" height="72.14" fill="#24906f"/><rect x="1312.91" y="1204.77" width="2.24" height="115.43" fill="#24906f"/><rect x="1315.15" y="1255.27" width="2.24" height="64.93" fill="#24906f"/><rect x="1317.40" y="1269.70" width="2.24" height="50.50" fill="#24906f"/><rect x="1319.64" y="1233.63" width="2.24" height="86.57" fill="#24906f"/><rect x="1321.88" y="1132.63" width="1.12" height="187.57" fill="#24906f"/><rect x="1323.00" y="1240.84" width="2.24" height="79.36" fill="#24906f"/><rect x="1325.25" y="1262.49" width="3.36" height="57.71" fill="#24906f"/><rect x="1328.61" y="1269.70" width="6.73" height="50.50" fill="#24906f"/><rect x="1335.34" y="1226.41" width="1.12" height="93.79" fill="#24906f"/><rect x="1336.46" y="1219.20" width="1.12" height="101.00" fill="#24906f"/><rect x="1337.58" y="1269.70" width="2.24" height="50.50" fill="#24906f"/><rect x="1339.82" y="1255.27" width="2.24" height="64.93" fill="#24906f"/><rect x="1342.07" y="1269.70" width="2.24" height="50.50" fill="#24906f"/><rect x="1344.31" y="1276.91" width="2.24" height="43.29" fill="#24906f"/><rect x="1346.55" y="1298.56" width="1.12" height="21.64" fill="#24906f"/><rect x="1347.67" y="1305.77" width="3.36" height="14.43" fill="#24906f"/><rect x="1351.04" y="1298.56" width="2.24" height="21.64" fill="#24906f"/><rect x="1353.28" y="1305.77" width="2.24" height="14.43" fill="#9fecc3"/><rect x="1355.52" y="1312.99" width="2.24" height="7.21" fill="#9fecc3"/><rect x="1357.77" y="1305.77" width="2.24" height="14.43" fill="#9fecc3"/><rect x="1360.01" y="1312.99" width="1.12" height="7.21" fill="#9fecc3"/><rect x="1361.13" y="1305.77" width="3.36" height="14.43" fill="#9fecc3"/><rect x="1364.49" y="1312.99" width="1.12" height="7.21" fill="#9fecc3"/><rect x="1365.61" y="1305.77" width="4.49" height="14.43" fill="#9fecc3"/><rect x="1370.10" y="1312.99" width="1.12" height="7.21" fill="#9fecc3"/><rect x="1371.22" y="1305.77" width="3.36" height="14.43" fill="#9fecc3"/><rect x="1374.59" y="1312.99" width="1.12" height="7.21" fill="#9fecc3"/><rect x="1375.71" y="1305.77" width="2.24" height="14.43" fill="#9fecc3"/><rect x="1377.95" y="1312.99" width="1.12" height="7.21" fill="#9fecc3"/><rect x="1379.07" y="1305.77" width="1.12" height="14.43" fill="#9fecc3"/><rect x="1380.19" y="1312.99" width="1.12" height="7.21" fill="#9fecc3"/><rect x="1381.31" y="1305.77" width="2.24" height="14.43" fill="#9fecc3"/><rect x="1383.56" y="1312.99" width="3.36" height="7.21" fill="#9fecc3"/><rect x="1386.92" y="1305.77" width="4.49" height="14.43" fill="#9fecc3"/><rect x="1391.40" y="1312.99" width="1.12" height="7.21" fill="#9fecc3"/><rect x="1392.53" y="1305.77" width="1.12" height="14.43" fill="#9fecc3"/><rect x="1393.65" y="1312.99" width="1.12" height="7.21" fill="#9fecc3"/><rect x="1394.77" y="1305.77" width="1.12" height="14.43" fill="#9fecc3"/><rect x="1395.89" y="1312.99" width="1.12" height="7.21" fill="#9fecc3"/><rect x="1397.01" y="1305.77" width="2.24" height="14.43" fill="#9fecc3"/><rect x="1399.25" y="1312.99" width="2.24" height="7.21" fill="#9fecc3"/><rect x="1401.50" y="1305.77" width="10.09" height="14.43" fill="#9fecc3"/><rect x="1411.59" y="1298.56" width="8.97" height="21.64" fill="#9fecc3"/><rect x="1420.56" y="1291.34" width="1.12" height="28.86" fill="#9fecc3"/><rect x="1421.68" y="1305.77" width="15.70" height="14.43" fill="#9fecc3"/><rect x="1437.38" y="1298.56" width="2.24" height="21.64" fill="#9fecc3"/><rect x="1439.62" y="1305.77" width="2.24" height="14.43" fill="#9fecc3"/><rect x="1441.86" y="1298.56" width="2.24" height="21.64" fill="#9fecc3"/><rect x="1444.11" y="1305.77" width="1.12" height="14.43" fill="#9fecc3"/><rect x="1445.23" y="1298.56" width="2.24" height="21.64" fill="#9fecc3"/><rect x="1447.47" y="1305.77" width="1.12" height="14.43" fill="#9fecc3"/><rect x="1448.59" y="1298.56" width="1.12" height="21.64" fill="#9fecc3"/><rect x="1449.71" y="1305.77" width="1.12" height="14.43" fill="#9fecc3"/><rect x="1450.84" y="1298.56" width="1.12" height="21.64" fill="#9fecc3"/><rect x="1451.96" y="1305.77" width="1.12" height="14.43" fill="#9fecc3"/><rect x="1453.08" y="1298.56" width="3.36" height="21.64" fill="#9fecc3"/><rect x="1456.44" y="1305.77" width="3.36" height="14.43" fill="#9fecc3"/><rect x="1459.81" y="1298.56" width="4.49" height="21.64" fill="#9fecc3"/><rect x="1464.29" y="1291.34" width="2.24" height="28.86" fill="#9fecc3"/><rect x="1466.53" y="1298.56" width="2.24" height="21.64" fill="#9fecc3"/><rect x="1468.78" y="1291.34" width="1.12" height="28.86" fill="#9fecc3"/><rect x="1469.90" y="1298.56" width="3.36" height="21.64" fill="#9fecc3"/><rect x="1473.26" y="1291.34" width="2.24" height="28.86" fill="#9fecc3"/><rect x="1475.50" y="1298.56" width="3.36" height="21.64" fill="#9fecc3"/><rect x="1478.87" y="1291.34" width="14.58" height="28.86" fill="#9fecc3"/><rect x="1493.45" y="1284.13" width="6.73" height="36.07" fill="#9fecc3"/><rect x="1500.17" y="1276.91" width="1.12" height="43.29" fill="#9fecc3"/><rect x="1501.30" y="1291.34" width="1.12" height="28.86" fill="#9fecc3"/><rect x="1502.42" y="1284.13" width="2.24" height="36.07" fill="#9fecc3"/><rect x="1504.66" y="1291.34" width="1.12" height="28.86" fill="#9fecc3"/><rect x="1505.78" y="1284.13" width="1.12" height="36.07" fill="#9fecc3"/><rect x="1506.90" y="1291.34" width="1.12" height="28.86" fill="#9fecc3"/><rect x="1508.02" y="1284.13" width="3.36" height="36.07" fill="#9fecc3"/><rect x="1511.39" y="1291.34" width="1.12" height="28.86" fill="#9fecc3"/><rect x="1512.51" y="1211.99" width="5.61" height="108.21" fill="#9fecc3"/><rect x="1518.12" y="1219.20" width="10.09" height="101.00" fill="#9fecc3"/><rect x="1528.21" y="1219.20" width="5.61" height="101.00" fill="#24906f"/><rect x="1533.81" y="1211.99" width="3.36" height="108.21" fill="#24906f"/><rect x="1537.18" y="1219.20" width="4.49" height="101.00" fill="#24906f"/><rect x="1541.66" y="1161.49" width="2.24" height="158.71" fill="#24906f"/><rect x="1543.91" y="1089.34" width="1.12" height="230.86" fill="#24906f"/><rect x="1545.03" y="901.77" width="1.12" height="418.43" fill="#24906f"/><rect x="1546.15" y="1038.84" width="2.24" height="281.36" fill="#24906f"/><rect x="1548.39" y="1175.91" width="5.61" height="144.29" fill="#24906f"/><rect x="1554.00" y="1197.56" width="2.24" height="122.64" fill="#24906f"/><rect x="1556.24" y="1240.84" width="3.36" height="79.36" fill="#24906f"/><rect x="1559.60" y="1147.06" width="1.12" height="173.14" fill="#24906f"/><rect x="1560.73" y="1009.99" width="1.12" height="310.21" fill="#24906f"/><rect x="1561.85" y="1211.99" width="2.24" height="108.21" fill="#24906f"/><rect x="1564.09" y="1248.06" width="1.12" height="72.14" fill="#24906f"/><rect x="1565.21" y="1255.27" width="8.97" height="64.93" fill="#24906f"/><rect x="1574.18" y="1197.56" width="2.24" height="122.64" fill="#24906f"/><rect x="1576.42" y="1219.20" width="1.12" height="101.00" fill="#24906f"/><rect x="1577.55" y="1255.27" width="6.73" height="64.93" fill="#24906f"/><rect x="1584.27" y="1211.99" width="2.24" height="108.21" fill="#24906f"/><rect x="1586.52" y="1262.49" width="15.70" height="57.71" fill="#24906f"/><rect x="1602.21" y="1190.34" width="2.24" height="129.86" fill="#24906f"/><rect x="1604.46" y="1118.20" width="2.24" height="202.00" fill="#24906f"/><rect x="1606.70" y="1219.20" width="1.12" height="101.00" fill="#24906f"/><rect x="1607.82" y="1255.27" width="4.49" height="64.93" fill="#24906f"/><rect x="1612.31" y="1262.49" width="5.61" height="57.71" fill="#24906f"/><rect x="1617.91" y="1269.70" width="15.70" height="50.50" fill="#24906f"/><rect x="1633.61" y="1183.13" width="1.12" height="137.07" fill="#24906f"/><rect x="1634.73" y="1269.70" width="6.73" height="50.50" fill="#24906f"/><rect x="1641.46" y="1255.27" width="1.12" height="64.93" fill="#24906f"/><rect x="1642.58" y="1269.70" width="12.33" height="50.50" fill="#24906f"/><rect x="1654.92" y="1190.34" width="2.24" height="129.86" fill="#24906f"/><rect x="1657.16" y="1161.49" width="2.24" height="158.71" fill="#24906f"/><rect x="1659.40" y="1183.13" width="2.24" height="137.07" fill="#24906f"/><rect x="1661.65" y="1204.77" width="3.36" height="115.43" fill="#24906f"/><rect x="1665.01" y="1255.27" width="8.97" height="64.93" fill="#24906f"/><rect x="1673.98" y="1291.34" width="2.24" height="28.86" fill="#24906f"/><rect x="1676.22" y="1291.34" width="1.12" height="28.86" fill="#9fecc3"/><rect x="1677.34" y="1276.91" width="2.24" height="43.29" fill="#9fecc3"/><rect x="1679.59" y="1298.56" width="1.12" height="21.64" fill="#9fecc3"/><rect x="1680.71" y="1291.34" width="1.12" height="28.86" fill="#9fecc3"/><rect x="1681.83" y="1298.56" width="2.24" height="21.64" fill="#9fecc3"/><rect x="1684.07" y="1291.34" width="1.12" height="28.86" fill="#9fecc3"/><rect x="1685.19" y="1298.56" width="1.12" height="21.64" fill="#9fecc3"/><rect x="1686.31" y="1291.34" width="1.12" height="28.86" fill="#9fecc3"/><rect x="1687.44" y="1298.56" width="3.36" height="21.64" fill="#9fecc3"/><rect x="1690.80" y="1291.34" width="1.12" height="28.86" fill="#9fecc3"/><rect x="1691.92" y="1298.56" width="1.12" height="21.64" fill="#9fecc3"/><rect x="1693.04" y="1291.34" width="1.12" height="28.86" fill="#9fecc3"/><rect x="1694.16" y="1298.56" width="1.12" height="21.64" fill="#9fecc3"/><rect x="1695.29" y="1291.34" width="1.12" height="28.86" fill="#9fecc3"/><rect x="1696.41" y="1298.56" width="1.12" height="21.64" fill="#9fecc3"/><rect x="1697.53" y="1312.99" width="3.36" height="7.21" fill="#9fecc3"/><rect x="1700.89" y="1305.77" width="1.12" height="14.43" fill="#9fecc3"/><rect x="1702.01" y="1312.99" width="1.12" height="7.21" fill="#9fecc3"/><rect x="1703.13" y="1305.77" width="1.12" height="14.43" fill="#9fecc3"/><rect x="1704.26" y="1312.99" width="2.24" height="7.21" fill="#9fecc3"/><rect x="1706.50" y="1305.77" width="1.12" height="14.43" fill="#9fecc3"/><rect x="1707.62" y="1312.99" width="2.24" height="7.21" fill="#9fecc3"/><rect x="1709.86" y="1305.77" width="1.12" height="14.43" fill="#9fecc3"/><rect x="1710.98" y="1298.56" width="1.12" height="21.64" fill="#9fecc3"/><rect x="1712.11" y="1312.99" width="1.12" height="7.21" fill="#9fecc3"/><rect x="1713.23" y="1305.77" width="1.12" height="14.43" fill="#9fecc3"/><rect x="1714.35" y="1312.99" width="1.12" height="7.21" fill="#9fecc3"/><rect x="1715.47" y="1305.77" width="1.12" height="14.43" fill="#9fecc3"/><rect x="1716.59" y="1312.99" width="1.12" height="7.21" fill="#9fecc3"/><rect x="1717.71" y="1305.77" width="2.24" height="14.43" fill="#9fecc3"/><rect x="1719.95" y="1312.99" width="1.12" height="7.21" fill="#9fecc3"/><rect x="1721.08" y="1305.77" width="6.73" height="14.43" fill="#9fecc3"/><rect x="1727.80" y="1298.56" width="1.12" height="21.64" fill="#9fecc3"/><rect x="1728.93" y="1312.99" width="1.12" height="7.21" fill="#9fecc3"/><rect x="1730.05" y="1305.77" width="1.12" height="14.43" fill="#9fecc3"/><rect x="1731.17" y="1312.99" width="1.12" height="7.21" fill="#9fecc3"/><rect x="1732.29" y="1305.77" width="1.12" height="14.43" fill="#9fecc3"/><rect x="1733.41" y="1312.99" width="1.12" height="7.21" fill="#9fecc3"/><rect x="1734.53" y="1305.77" width="4.49" height="14.43" fill="#9fecc3"/><rect x="1739.02" y="1312.99" width="1.12" height="7.21" fill="#9fecc3"/><rect x="1740.14" y="1305.77" width="1.12" height="14.43" fill="#9fecc3"/><rect x="1741.26" y="1298.56" width="1.12" height="21.64" fill="#9fecc3"/><rect x="1742.38" y="1312.99" width="1.12" height="7.21" fill="#9fecc3"/><rect x="1743.50" y="1305.77" width="1.12" height="14.43" fill="#9fecc3"/><rect x="1744.62" y="1312.99" width="1.12" height="7.21" fill="#9fecc3"/><rect x="1745.75" y="1305.77" width="2.24" height="14.43" fill="#9fecc3"/><rect x="1747.99" y="1312.99" width="1.12" height="7.21" fill="#9fecc3"/><rect x="1749.11" y="1305.77" width="1.12" height="14.43" fill="#9fecc3"/><rect x="1750.23" y="1312.99" width="1.12" height="7.21" fill="#9fecc3"/><rect x="1751.35" y="1305.77" width="2.24" height="14.43" fill="#9fecc3"/><rect x="1753.59" y="1312.99" width="1.12" height="7.21" fill="#9fecc3"/><rect x="1754.72" y="1298.56" width="1.12" height="21.64" fill="#9fecc3"/><rect x="1755.84" y="1305.77" width="1.12" height="14.43" fill="#9fecc3"/><rect x="1756.96" y="1312.99" width="1.12" height="7.21" fill="#9fecc3"/><rect x="1758.08" y="1305.77" width="1.12" height="14.43" fill="#9fecc3"/><rect x="1759.20" y="1312.99" width="1.12" height="7.21" fill="#9fecc3"/><rect x="1760.32" y="1305.77" width="1.12" height="14.43" fill="#9fecc3"/><rect x="1761.44" y="1298.56" width="4.49" height="21.64" fill="#9fecc3"/><rect x="1765.93" y="1305.77" width="1.12" height="14.43" fill="#9fecc3"/><rect x="1767.05" y="1298.56" width="1.12" height="21.64" fill="#9fecc3"/><rect x="1768.17" y="1305.77" width="2.24" height="14.43" fill="#9fecc3"/><rect x="1770.41" y="1298.56" width="2.24" height="21.64" fill="#9fecc3"/><rect x="1772.66" y="1305.77" width="1.12" height="14.43" fill="#9fecc3"/><rect x="1773.78" y="1298.56" width="6.73" height="21.64" fill="#9fecc3"/><rect x="1780.51" y="1305.77" width="2.24" height="14.43" fill="#9fecc3"/><rect x="1782.75" y="1291.34" width="2.24" height="28.86" fill="#9fecc3"/><rect x="1784.99" y="1298.56" width="2.24" height="21.64" fill="#9fecc3"/><rect x="1787.23" y="1305.77" width="1.12" height="14.43" fill="#9fecc3"/><rect x="1788.36" y="1298.56" width="3.36" height="21.64" fill="#9fecc3"/><rect x="1791.72" y="1305.77" width="3.36" height="14.43" fill="#9fecc3"/><rect x="1795.08" y="1298.56" width="3.36" height="21.64" fill="#9fecc3"/><rect x="1798.45" y="1305.77" width="2.24" height="14.43" fill="#9fecc3"/><rect x="1800.69" y="1298.56" width="1.12" height="21.64" fill="#9fecc3"/><rect x="1801.81" y="1305.77" width="1.12" height="14.43" fill="#9fecc3"/><rect x="1802.93" y="1298.56" width="1.12" height="21.64" fill="#9fecc3"/><rect x="1804.05" y="1305.77" width="2.24" height="14.43" fill="#9fecc3"/><rect x="1806.30" y="1298.56" width="1.12" height="21.64" fill="#9fecc3"/><rect x="1807.42" y="1305.77" width="1.12" height="14.43" fill="#9fecc3"/><rect x="1808.54" y="1291.34" width="1.12" height="28.86" fill="#9fecc3"/><rect x="1809.66" y="1305.77" width="1.12" height="14.43" fill="#9fecc3"/><rect x="1810.78" y="1298.56" width="3.36" height="21.64" fill="#9fecc3"/><rect x="1814.15" y="1305.77" width="1.12" height="14.43" fill="#9fecc3"/><rect x="1815.27" y="1298.56" width="1.12" height="21.64" fill="#9fecc3"/><rect x="1816.39" y="1305.77" width="1.12" height="14.43" fill="#9fecc3"/><rect x="1817.51" y="1291.34" width="2.24" height="28.86" fill="#9fecc3"/><rect x="1819.75" y="1298.56" width="1.12" height="21.64" fill="#9fecc3"/><rect x="1820.87" y="1305.77" width="4.49" height="14.43" fill="#9fecc3"/><rect x="1825.36" y="1298.56" width="4.49" height="21.64" fill="#9fecc3"/><rect x="1829.84" y="1305.77" width="2.24" height="14.43" fill="#9fecc3"/><rect x="1832.09" y="1291.34" width="1.12" height="28.86" fill="#9fecc3"/><rect x="1833.21" y="1298.56" width="1.12" height="21.64" fill="#9fecc3"/><rect x="1834.33" y="1305.77" width="2.24" height="14.43" fill="#9fecc3"/><rect x="1836.57" y="1298.56" width="1.12" height="21.64" fill="#9fecc3"/><rect x="1837.69" y="1305.77" width="1.12" height="14.43" fill="#9fecc3"/><rect x="1838.82" y="1298.56" width="4.49" height="21.64" fill="#9fecc3"/><rect x="1843.30" y="1284.13" width="2.24" height="36.07" fill="#9fecc3"/><rect x="1845.54" y="1305.77" width="4.49" height="14.43" fill="#9fecc3"/><rect x="1850.03" y="1298.56" width="1.12" height="21.64" fill="#9fecc3"/><rect x="1851.15" y="1298.56" width="8.97" height="21.64" fill="#24906f"/><rect x="1860.12" y="1291.34" width="1.12" height="28.86" fill="#24906f"/><rect x="1861.24" y="1240.84" width="2.24" height="79.36" fill="#24906f"/><rect x="1863.48" y="1211.99" width="1.12" height="108.21" fill="#24906f"/><rect x="1864.61" y="1125.41" width="2.24" height="194.79" fill="#24906f"/><rect x="1866.85" y="1139.84" width="1.12" height="180.36" fill="#24906f"/><rect x="1867.97" y="1161.49" width="2.24" height="158.71" fill="#24906f"/><rect x="1870.21" y="1017.20" width="2.24" height="303.00" fill="#24906f"/><rect x="1872.46" y="1067.70" width="2.24" height="252.50" fill="#24906f"/><rect x="1874.70" y="1074.91" width="1.12" height="245.29" fill="#24906f"/><rect x="1875.82" y="1168.70" width="2.24" height="151.50" fill="#24906f"/><rect x="1878.06" y="1255.27" width="3.36" height="64.93" fill="#24906f"/><rect x="1881.43" y="1269.70" width="1.12" height="50.50" fill="#24906f"/><rect x="1882.55" y="1183.13" width="1.12" height="137.07" fill="#24906f"/><rect x="1883.67" y="1233.63" width="2.24" height="86.57" fill="#24906f"/><rect x="1885.91" y="1031.63" width="1.12" height="288.57" fill="#24906f"/><rect x="1887.03" y="1046.06" width="2.24" height="274.14" fill="#24906f"/><rect x="1889.28" y="1262.49" width="16.82" height="57.71" fill="#24906f"/><rect x="1906.10" y="1204.77" width="2.24" height="115.43" fill="#24906f"/><rect x="1908.34" y="1118.20" width="2.24" height="202.00" fill="#24906f"/><rect x="1910.58" y="1240.84" width="2.24" height="79.36" fill="#24906f"/><rect x="1912.82" y="1161.49" width="2.24" height="158.71" fill="#24906f"/><rect x="1915.07" y="1118.20" width="1.12" height="202.00" fill="#24906f"/><rect x="1916.19" y="858.49" width="2.24" height="461.71" fill="#24906f"/><rect x="1918.43" y="1197.56" width="1.12" height="122.64" fill="#24906f"/><rect x="1919.55" y="1262.49" width="5.61" height="57.71" fill="#24906f"/><rect x="1925.16" y="1204.77" width="2.24" height="115.43" fill="#24906f"/><rect x="1927.40" y="1226.41" width="1.12" height="93.79" fill="#24906f"/><rect x="1928.52" y="1240.84" width="3.36" height="79.36" fill="#24906f"/><rect x="1931.89" y="1262.49" width="7.85" height="57.71" fill="#24906f"/><rect x="1939.74" y="1276.91" width="6.73" height="43.29" fill="#24906f"/><rect x="1946.46" y="995.56" width="2.24" height="324.64" fill="#24906f"/><rect x="1948.71" y="1017.20" width="3.36" height="303.00" fill="#24906f"/><rect x="1952.07" y="1219.20" width="2.24" height="101.00" fill="#24906f"/><rect x="1954.31" y="1255.27" width="3.36" height="64.93" fill="#24906f"/><rect x="1957.68" y="1125.41" width="2.24" height="194.79" fill="#24906f"/><rect x="1959.92" y="1154.27" width="1.12" height="165.93" fill="#24906f"/><rect x="1961.04" y="1053.27" width="2.24" height="266.93" fill="#24906f"/><rect x="1963.28" y="1183.13" width="1.12" height="137.07" fill="#24906f"/><rect x="1964.40" y="1269.70" width="5.61" height="50.50" fill="#24906f"/><rect x="1970.01" y="1284.13" width="3.36" height="36.07" fill="#24906f"/><rect x="1973.37" y="1147.06" width="1.12" height="173.14" fill="#24906f"/><rect x="1974.50" y="858.49" width="1.12" height="461.71" fill="#24906f"/><rect x="1975.62" y="973.91" width="2.24" height="346.29" fill="#24906f"/><rect x="1977.86" y="1269.70" width="7.85" height="50.50" fill="#24906f"/><rect x="1985.71" y="1262.49" width="3.36" height="57.71" fill="#24906f"/><rect x="1989.07" y="1147.06" width="2.24" height="173.14" fill="#24906f"/><rect x="1991.32" y="1204.77" width="2.24" height="115.43" fill="#24906f"/><rect x="1993.56" y="1262.49" width="2.24" height="57.71" fill="#24906f"/><rect x="1995.80" y="1255.27" width="3.36" height="64.93" fill="#24906f"/><rect x="1999.17" y="1269.70" width="6.73" height="50.50" fill="#9fecc3"/><rect x="2005.89" y="1298.56" width="3.36" height="21.64" fill="#9fecc3"/><rect x="2009.26" y="1305.77" width="1.12" height="14.43" fill="#9fecc3"/><rect x="2010.38" y="1312.99" width="1.12" height="7.21" fill="#9fecc3"/><rect x="2011.50" y="1305.77" width="3.36" height="14.43" fill="#9fecc3"/><rect x="2014.86" y="1312.99" width="1.12" height="7.21" fill="#9fecc3"/><rect x="2015.99" y="1305.77" width="1.12" height="14.43" fill="#9fecc3"/><rect x="2017.11" y="1312.99" width="1.12" height="7.21" fill="#9fecc3"/><rect x="2018.23" y="1305.77" width="1.12" height="14.43" fill="#9fecc3"/><rect x="2019.35" y="1312.99" width="1.12" height="7.21" fill="#9fecc3"/><rect x="2020.47" y="1305.77" width="1.12" height="14.43" fill="#9fecc3"/><rect x="2021.59" y="1312.99" width="1.12" height="7.21" fill="#9fecc3"/><rect x="2022.71" y="1298.56" width="4.49" height="21.64" fill="#9fecc3"/><rect x="2027.20" y="1305.77" width="1.12" height="14.43" fill="#9fecc3"/><rect x="2028.32" y="1312.99" width="1.12" height="7.21" fill="#9fecc3"/><rect x="2029.44" y="1305.77" width="3.36" height="14.43" fill="#9fecc3"/><rect x="2032.81" y="1312.99" width="1.12" height="7.21" fill="#9fecc3"/><rect x="2033.93" y="1305.77" width="7.85" height="14.43" fill="#9fecc3"/><rect x="2041.78" y="1312.99" width="1.12" height="7.21" fill="#9fecc3"/><rect x="2042.90" y="1305.77" width="3.36" height="14.43" fill="#9fecc3"/><rect x="2046.26" y="1312.99" width="3.36" height="7.21" fill="#9fecc3"/><rect x="2049.63" y="1305.77" width="1.12" height="14.43" fill="#9fecc3"/><rect x="2050.75" y="1312.99" width="3.36" height="7.21" fill="#9fecc3"/><rect x="2054.11" y="1305.77" width="4.49" height="14.43" fill="#9fecc3"/><rect x="2058.60" y="1312.99" width="2.24" height="7.21" fill="#9fecc3"/><rect x="2060.84" y="1305.77" width="1.12" height="14.43" fill="#9fecc3"/><rect x="2061.96" y="1312.99" width="1.12" height="7.21" fill="#9fecc3"/><rect x="2063.08" y="1305.77" width="4.49" height="14.43" fill="#9fecc3"/><rect x="2067.57" y="1312.99" width="1.12" height="7.21" fill="#9fecc3"/><rect x="2068.69" y="1305.77" width="10.09" height="14.43" fill="#9fecc3"/><rect x="2078.78" y="1312.99" width="1.12" height="7.21" fill="#9fecc3"/><rect x="2079.90" y="1305.77" width="1.12" height="14.43" fill="#9fecc3"/><rect x="2081.02" y="1312.99" width="1.12" height="7.21" fill="#9fecc3"/><rect x="2082.14" y="1305.77" width="4.49" height="14.43" fill="#9fecc3"/><rect x="2086.63" y="1312.99" width="1.12" height="7.21" fill="#9fecc3"/><rect x="2087.75" y="1305.77" width="4.49" height="14.43" fill="#9fecc3"/><rect x="2092.24" y="1312.99" width="1.12" height="7.21" fill="#9fecc3"/><rect x="2093.36" y="1305.77" width="3.36" height="14.43" fill="#9fecc3"/><rect x="2096.72" y="1298.56" width="3.36" height="21.64" fill="#9fecc3"/><rect x="2100.09" y="1305.77" width="1.12" height="14.43" fill="#9fecc3"/><rect x="2101.21" y="1298.56" width="3.36" height="21.64" fill="#9fecc3"/><rect x="2104.57" y="1305.77" width="1.12" height="14.43" fill="#9fecc3"/><rect x="2105.69" y="1298.56" width="1.12" height="21.64" fill="#9fecc3"/><rect x="2106.81" y="1305.77" width="1.12" height="14.43" fill="#9fecc3"/><rect x="2107.93" y="1298.56" width="2.24" height="21.64" fill="#9fecc3"/><rect x="2110.18" y="1305.77" width="1.12" height="14.43" fill="#9fecc3"/><rect x="2111.30" y="1298.56" width="2.24" height="21.64" fill="#9fecc3"/><rect x="2113.54" y="1305.77" width="1.12" height="14.43" fill="#9fecc3"/><rect x="2114.66" y="1298.56" width="1.12" height="21.64" fill="#9fecc3"/><rect x="2115.78" y="1305.77" width="4.49" height="14.43" fill="#9fecc3"/><rect x="2120.27" y="1298.56" width="1.12" height="21.64" fill="#9fecc3"/><rect x="2121.39" y="1291.34" width="6.73" height="28.86" fill="#9fecc3"/><rect x="2128.12" y="1298.56" width="2.24" height="21.64" fill="#9fecc3"/><rect x="2130.36" y="1305.77" width="1.12" height="14.43" fill="#9fecc3"/><rect x="2131.48" y="1298.56" width="2.24" height="21.64" fill="#9fecc3"/><rect x="2133.73" y="1305.77" width="1.12" height="14.43" fill="#9fecc3"/><rect x="2134.85" y="1298.56" width="3.36" height="21.64" fill="#9fecc3"/><rect x="2138.21" y="1305.77" width="3.36" height="14.43" fill="#9fecc3"/><rect x="2141.57" y="1298.56" width="3.36" height="21.64" fill="#9fecc3"/><rect x="2144.94" y="1305.77" width="3.36" height="14.43" fill="#9fecc3"/><rect x="2148.30" y="1291.34" width="1.12" height="28.86" fill="#9fecc3"/><rect x="2149.42" y="1298.56" width="1.12" height="21.64" fill="#9fecc3"/><rect x="2150.54" y="1305.77" width="2.24" height="14.43" fill="#9fecc3"/><rect x="2152.79" y="1298.56" width="2.24" height="21.64" fill="#9fecc3"/><rect x="2155.03" y="1305.77" width="1.12" height="14.43" fill="#9fecc3"/><rect x="2156.15" y="1298.56" width="3.36" height="21.64" fill="#9fecc3"/><rect x="2159.52" y="1305.77" width="2.24" height="14.43" fill="#9fecc3"/><rect x="2161.76" y="1298.56" width="4.49" height="21.64" fill="#9fecc3"/><rect x="2166.24" y="1291.34" width="8.97" height="28.86" fill="#9fecc3"/><rect x="2175.21" y="1298.56" width="11.21" height="21.64" fill="#24906f"/><rect x="2186.43" y="1197.56" width="1.12" height="122.64" fill="#24906f"/><rect x="2187.55" y="966.70" width="1.12" height="353.50" fill="#24906f"/><rect x="2188.67" y="995.56" width="2.24" height="324.64" fill="#24906f"/><rect x="2190.91" y="1132.63" width="2.24" height="187.57" fill="#24906f"/><rect x="2193.16" y="1103.77" width="1.12" height="216.43" fill="#24906f"/><rect x="2194.28" y="1118.20" width="2.24" height="202.00" fill="#24906f"/><rect x="2196.52" y="1139.84" width="1.12" height="180.36" fill="#24906f"/><rect x="2197.64" y="1096.56" width="1.12" height="223.64" fill="#24906f"/><rect x="2198.76" y="1046.06" width="1.12" height="274.14" fill="#24906f"/><rect x="2199.88" y="1168.70" width="2.24" height="151.50" fill="#24906f"/><rect x="2202.13" y="1197.56" width="2.24" height="122.64" fill="#24906f"/><rect x="2204.37" y="1190.34" width="2.24" height="129.86" fill="#24906f"/><rect x="2206.61" y="1248.06" width="2.24" height="72.14" fill="#24906f"/><rect x="2208.85" y="1089.34" width="1.12" height="230.86" fill="#24906f"/><rect x="2209.98" y="1125.41" width="2.24" height="194.79" fill="#24906f"/><rect x="2212.22" y="1139.84" width="1.12" height="180.36" fill="#24906f"/><rect x="2213.34" y="1089.34" width="2.24" height="230.86" fill="#24906f"/><rect x="2215.58" y="1125.41" width="1.12" height="194.79" fill="#24906f"/><rect x="2216.70" y="1053.27" width="2.24" height="266.93" fill="#24906f"/><rect x="2218.95" y="1248.06" width="1.12" height="72.14" fill="#24906f"/><rect x="2220.07" y="1175.91" width="3.36" height="144.29" fill="#24906f"/><rect x="2223.43" y="1211.99" width="1.12" height="108.21" fill="#24906f"/><rect x="2224.55" y="1168.70" width="2.24" height="151.50" fill="#24906f"/><rect x="2226.80" y="1125.41" width="1.12" height="194.79" fill="#24906f"/><rect x="2227.92" y="1147.06" width="1.12" height="173.14" fill="#24906f"/><rect x="2229.04" y="1248.06" width="3.36" height="72.14" fill="#24906f"/><rect x="2232.40" y="1017.20" width="1.12" height="303.00" fill="#24906f"/><rect x="2233.52" y="1168.70" width="3.36" height="151.50" fill="#24906f"/><rect x="2236.89" y="1103.77" width="1.12" height="216.43" fill="#24906f"/><rect x="2238.01" y="1161.49" width="1.12" height="158.71" fill="#24906f"/><rect x="2239.13" y="1248.06" width="3.36" height="72.14" fill="#24906f"/><rect x="2242.49" y="1197.56" width="1.12" height="122.64" fill="#24906f"/><rect x="2243.62" y="1269.70" width="2.24" height="50.50" fill="#24906f"/><rect x="2245.86" y="1197.56" width="1.12" height="122.64" fill="#24906f"/><rect x="2246.98" y="1248.06" width="3.36" height="72.14" fill="#24906f"/><rect x="2250.34" y="1269.70" width="4.49" height="50.50" fill="#24906f"/><rect x="2254.83" y="1197.56" width="2.24" height="122.64" fill="#24906f"/><rect x="2257.07" y="1269.70" width="3.36" height="50.50" fill="#24906f"/><rect x="2260.44" y="1262.49" width="1.12" height="57.71" fill="#24906f"/><rect x="2261.56" y="1269.70" width="3.36" height="50.50" fill="#24906f"/><rect x="2264.92" y="1240.84" width="2.24" height="79.36" fill="#24906f"/><rect x="2267.16" y="1038.84" width="2.24" height="281.36" fill="#24906f"/><rect x="2269.41" y="981.13" width="2.24" height="339.07" fill="#24906f"/><rect x="2271.65" y="1118.20" width="1.12" height="202.00" fill="#24906f"/><rect x="2272.77" y="1211.99" width="2.24" height="108.21" fill="#24906f"/><rect x="2275.01" y="1183.13" width="2.24" height="137.07" fill="#24906f"/><rect x="2277.26" y="1255.27" width="2.24" height="64.93" fill="#24906f"/><rect x="2279.50" y="1147.06" width="2.24" height="173.14" fill="#24906f"/><rect x="2281.74" y="1002.77" width="1.12" height="317.43" fill="#24906f"/><rect x="2282.86" y="1038.84" width="2.24" height="281.36" fill="#24906f"/><rect x="2285.10" y="973.91" width="1.12" height="346.29" fill="#24906f"/><rect x="2286.23" y="1082.13" width="2.24" height="238.07" fill="#24906f"/><rect x="2288.47" y="1009.99" width="2.24" height="310.21" fill="#24906f"/><rect x="2290.71" y="1031.63" width="1.12" height="288.57" fill="#24906f"/><rect x="2291.83" y="1211.99" width="5.61" height="108.21" fill="#24906f"/><rect x="2297.44" y="1197.56" width="2.24" height="122.64" fill="#24906f"/><rect x="2299.68" y="1240.84" width="2.24" height="79.36" fill="#24906f"/><rect x="2301.92" y="1269.70" width="3.36" height="50.50" fill="#24906f"/><rect x="2305.29" y="1147.06" width="1.12" height="173.14" fill="#24906f"/><rect x="2306.41" y="1118.20" width="1.12" height="202.00" fill="#24906f"/><rect x="2307.53" y="1204.77" width="1.12" height="115.43" fill="#24906f"/><rect x="2308.65" y="1248.06" width="2.24" height="72.14" fill="#24906f"/><rect x="2310.90" y="1269.70" width="2.24" height="50.50" fill="#24906f"/><rect x="2313.14" y="1248.06" width="1.12" height="72.14" fill="#24906f"/><rect x="2314.26" y="1269.70" width="1.12" height="50.50" fill="#24906f"/><rect x="2315.38" y="1248.06" width="2.24" height="72.14" fill="#24906f"/><rect x="2317.62" y="1269.70" width="1.12" height="50.50" fill="#24906f"/>
<line x1="155.2" y1="815.2" x2="155.2" y2="1321.2" stroke="#555" stroke-width="2"/>
<line x1="155.7" y1="1321.2" x2="2416.3" y2="1321.2" stroke="#777" stroke-width="1.6"/>
<line x1="143" y1="1319.5" x2="154.7" y2="1319.5" stroke="#999" stroke-width="1"/>
<text x="133.00" y="1326.40" font-size="20.8" fill="#333" text-anchor="end" font-weight="normal" textLength="12.0" lengthAdjust="spacingAndGlyphs" >0</text>
<line x1="143" y1="1247.5" x2="154.7" y2="1247.5" stroke="#999" stroke-width="1"/>
<text x="133.00" y="1254.26" font-size="20.8" fill="#333" text-anchor="end" font-weight="normal" textLength="24.1" lengthAdjust="spacingAndGlyphs" >10</text>
<line x1="143" y1="1175.5" x2="154.7" y2="1175.5" stroke="#999" stroke-width="1"/>
<text x="133.00" y="1182.11" font-size="20.8" fill="#333" text-anchor="end" font-weight="normal" textLength="24.1" lengthAdjust="spacingAndGlyphs" >20</text>
<line x1="143" y1="1103.5" x2="154.7" y2="1103.5" stroke="#999" stroke-width="1"/>
<text x="133.00" y="1109.97" font-size="20.8" fill="#333" text-anchor="end" font-weight="normal" textLength="24.1" lengthAdjust="spacingAndGlyphs" >30</text>
<line x1="143" y1="1031.5" x2="154.7" y2="1031.5" stroke="#999" stroke-width="1"/>
<text x="133.00" y="1037.83" font-size="20.8" fill="#333" text-anchor="end" font-weight="normal" textLength="24.1" lengthAdjust="spacingAndGlyphs" >40</text>
<line x1="143" y1="959.5" x2="154.7" y2="959.5" stroke="#999" stroke-width="1"/>
<text x="133.00" y="965.69" font-size="20.8" fill="#333" text-anchor="end" font-weight="normal" textLength="24.1" lengthAdjust="spacingAndGlyphs" >50</text>
<line x1="143" y1="887.5" x2="154.7" y2="887.5" stroke="#999" stroke-width="1"/>
<text x="133.00" y="893.54" font-size="20.8" fill="#333" text-anchor="end" font-weight="normal" textLength="24.1" lengthAdjust="spacingAndGlyphs" >60</text>
<line x1="143" y1="815.5" x2="154.7" y2="815.5" stroke="#999" stroke-width="1"/>
<text x="133.00" y="821.40" font-size="20.8" fill="#333" text-anchor="end" font-weight="normal" textLength="24.1" lengthAdjust="spacingAndGlyphs" >70</text>
<line x1="155.7" y1="1322.2" x2="155.7" y2="1332.2" stroke="#a0a0a0" stroke-width="1.2"/>
<text x="155.70" y="1357.30" font-size="20" fill="#111" text-anchor="middle" font-weight="normal" textLength="74.5" lengthAdjust="spacingAndGlyphs" >ven. 10</text>
<line x1="478.6" y1="1322.2" x2="478.6" y2="1332.2" stroke="#a0a0a0" stroke-width="1.2"/>
<text x="478.64" y="1357.30" font-size="20" fill="#111" text-anchor="middle" font-weight="normal" textLength="79.7" lengthAdjust="spacingAndGlyphs" >sam. 11</text>
<line x1="801.6" y1="1322.2" x2="801.6" y2="1332.2" stroke="#a0a0a0" stroke-width="1.2"/>
<text x="801.59" y="1357.30" font-size="20" fill="#111" text-anchor="middle" font-weight="normal" textLength="75.7" lengthAdjust="spacingAndGlyphs" >dim. 12</text>
<line x1="1124.5" y1="1322.2" x2="1124.5" y2="1332.2" stroke="#a0a0a0" stroke-width="1.2"/>
<text x="1124.53" y="1357.30" font-size="20" fill="#111" text-anchor="middle" font-weight="normal" textLength="69.6" lengthAdjust="spacingAndGlyphs" >lun. 13</text>
<line x1="1447.5" y1="1322.2" x2="1447.5" y2="1332.2" stroke="#a0a0a0" stroke-width="1.2"/>
<text x="1447.47" y="1357.30" font-size="20" fill="#111" text-anchor="middle" font-weight="normal" textLength="75.7" lengthAdjust="spacingAndGlyphs" >mar. 14</text>
<line x1="1770.4" y1="1322.2" x2="1770.4" y2="1332.2" stroke="#a0a0a0" stroke-width="1.2"/>
<text x="1770.41" y="1357.30" font-size="20" fill="#111" text-anchor="middle" font-weight="normal" textLength="75.6" lengthAdjust="spacingAndGlyphs" >mer. 15</text>
<line x1="2093.4" y1="1322.2" x2="2093.4" y2="1332.2" stroke="#a0a0a0" stroke-width="1.2"/>
<text x="2093.36" y="1357.30" font-size="20" fill="#111" text-anchor="middle" font-weight="normal" textLength="70.7" lengthAdjust="spacingAndGlyphs" >jeu. 16</text>
<text x="0.00" y="0.00" font-size="23.5" fill="#333" text-anchor="middle" font-weight="normal" textLength="29.5" lengthAdjust="spacingAndGlyphs" transform="translate(86.2,1067.7) rotate(-90)">kW</text>
<rect x="561.8" y="805.8" width="412.4" height="58.4" rx="9.5" fill="#fff" stroke="#7f7f7f" stroke-width="3"/>
<text x="610.70" y="846.70" font-size="28.5" fill="#111" text-anchor="start" font-weight="normal" textLength="334.5" lengthAdjust="spacingAndGlyphs" >Consommation: 1 058 kWh</text>
<rect x="1099.8" y="805.8" width="411.8" height="58.4" rx="9.5" fill="#fff" stroke="#7f7f7f" stroke-width="3"/>
<text x="1221.40" y="846.70" font-size="28.5" fill="#111" text-anchor="start" font-weight="normal" textLength="189.3" lengthAdjust="spacingAndGlyphs" xml:space="preserve">P Max :  66 kW</text>
<rect x="1610.2" y="805.8" width="411.8" height="58.4" rx="9.5" fill="#fff" stroke="#7f7f7f" stroke-width="3"/>
<text x="1745.90" y="846.70" font-size="28.5" fill="#111" text-anchor="start" font-weight="normal" textLength="159.8" lengthAdjust="spacingAndGlyphs" >P min : 1 kW</text>
<path d="M2322.5,1322 H2437.8 V1372 Q2437.8,1380.8 2429,1380.8 H2322.5 Z" fill="#fff"/>
<path d="M2362.5,1340 A13.5,13.5 0 1 0 2363.5,1351 L2349,1351" fill="none" stroke="#0a6eb8" stroke-width="5.2" stroke-linecap="round"/>
<path d="M2369,1342 Q2372,1336.5 2377.5,1336.8 Q2384,1337.5 2384,1343.5 Q2384,1348 2379,1352 L2373.5,1358.8 H2385.8 V1363.3 H2367.5 L2376,1352 Q2379.5,1347.5 2378.5,1344 Q2377,1341 2373.5,1342.5 Z" fill="#0a6eb8"/>
<path d="M2392.2,1325 L2384,1338 L2390,1340 L2388,1363 L2399.5,1338.5 L2393,1337 Z" fill="#e95b24"/>
<path d="M2397.0,1339.0 H2424.5 L2419.5,1344.8 H2392.0 Z" fill="#f39322"/>
<path d="M2393.3,1348.2 H2420.8 L2415.8,1354.0 H2388.3 Z" fill="#f39322"/>
<path d="M2389.6,1357.4 H2417.1 L2412.1,1363.2 H2384.6 Z" fill="#f39322"/>
<text x="2394.00" y="1334.60" font-size="6.5" fill="#e95b24" text-anchor="start" font-weight="bold" textLength="29.5" lengthAdjust="spacingAndGlyphs" >FRANCE</text>
<rect x="2340.00" y="1365.60" width="74.00" height="1.60" fill="#b5d3ec" />
</svg></body></html>
